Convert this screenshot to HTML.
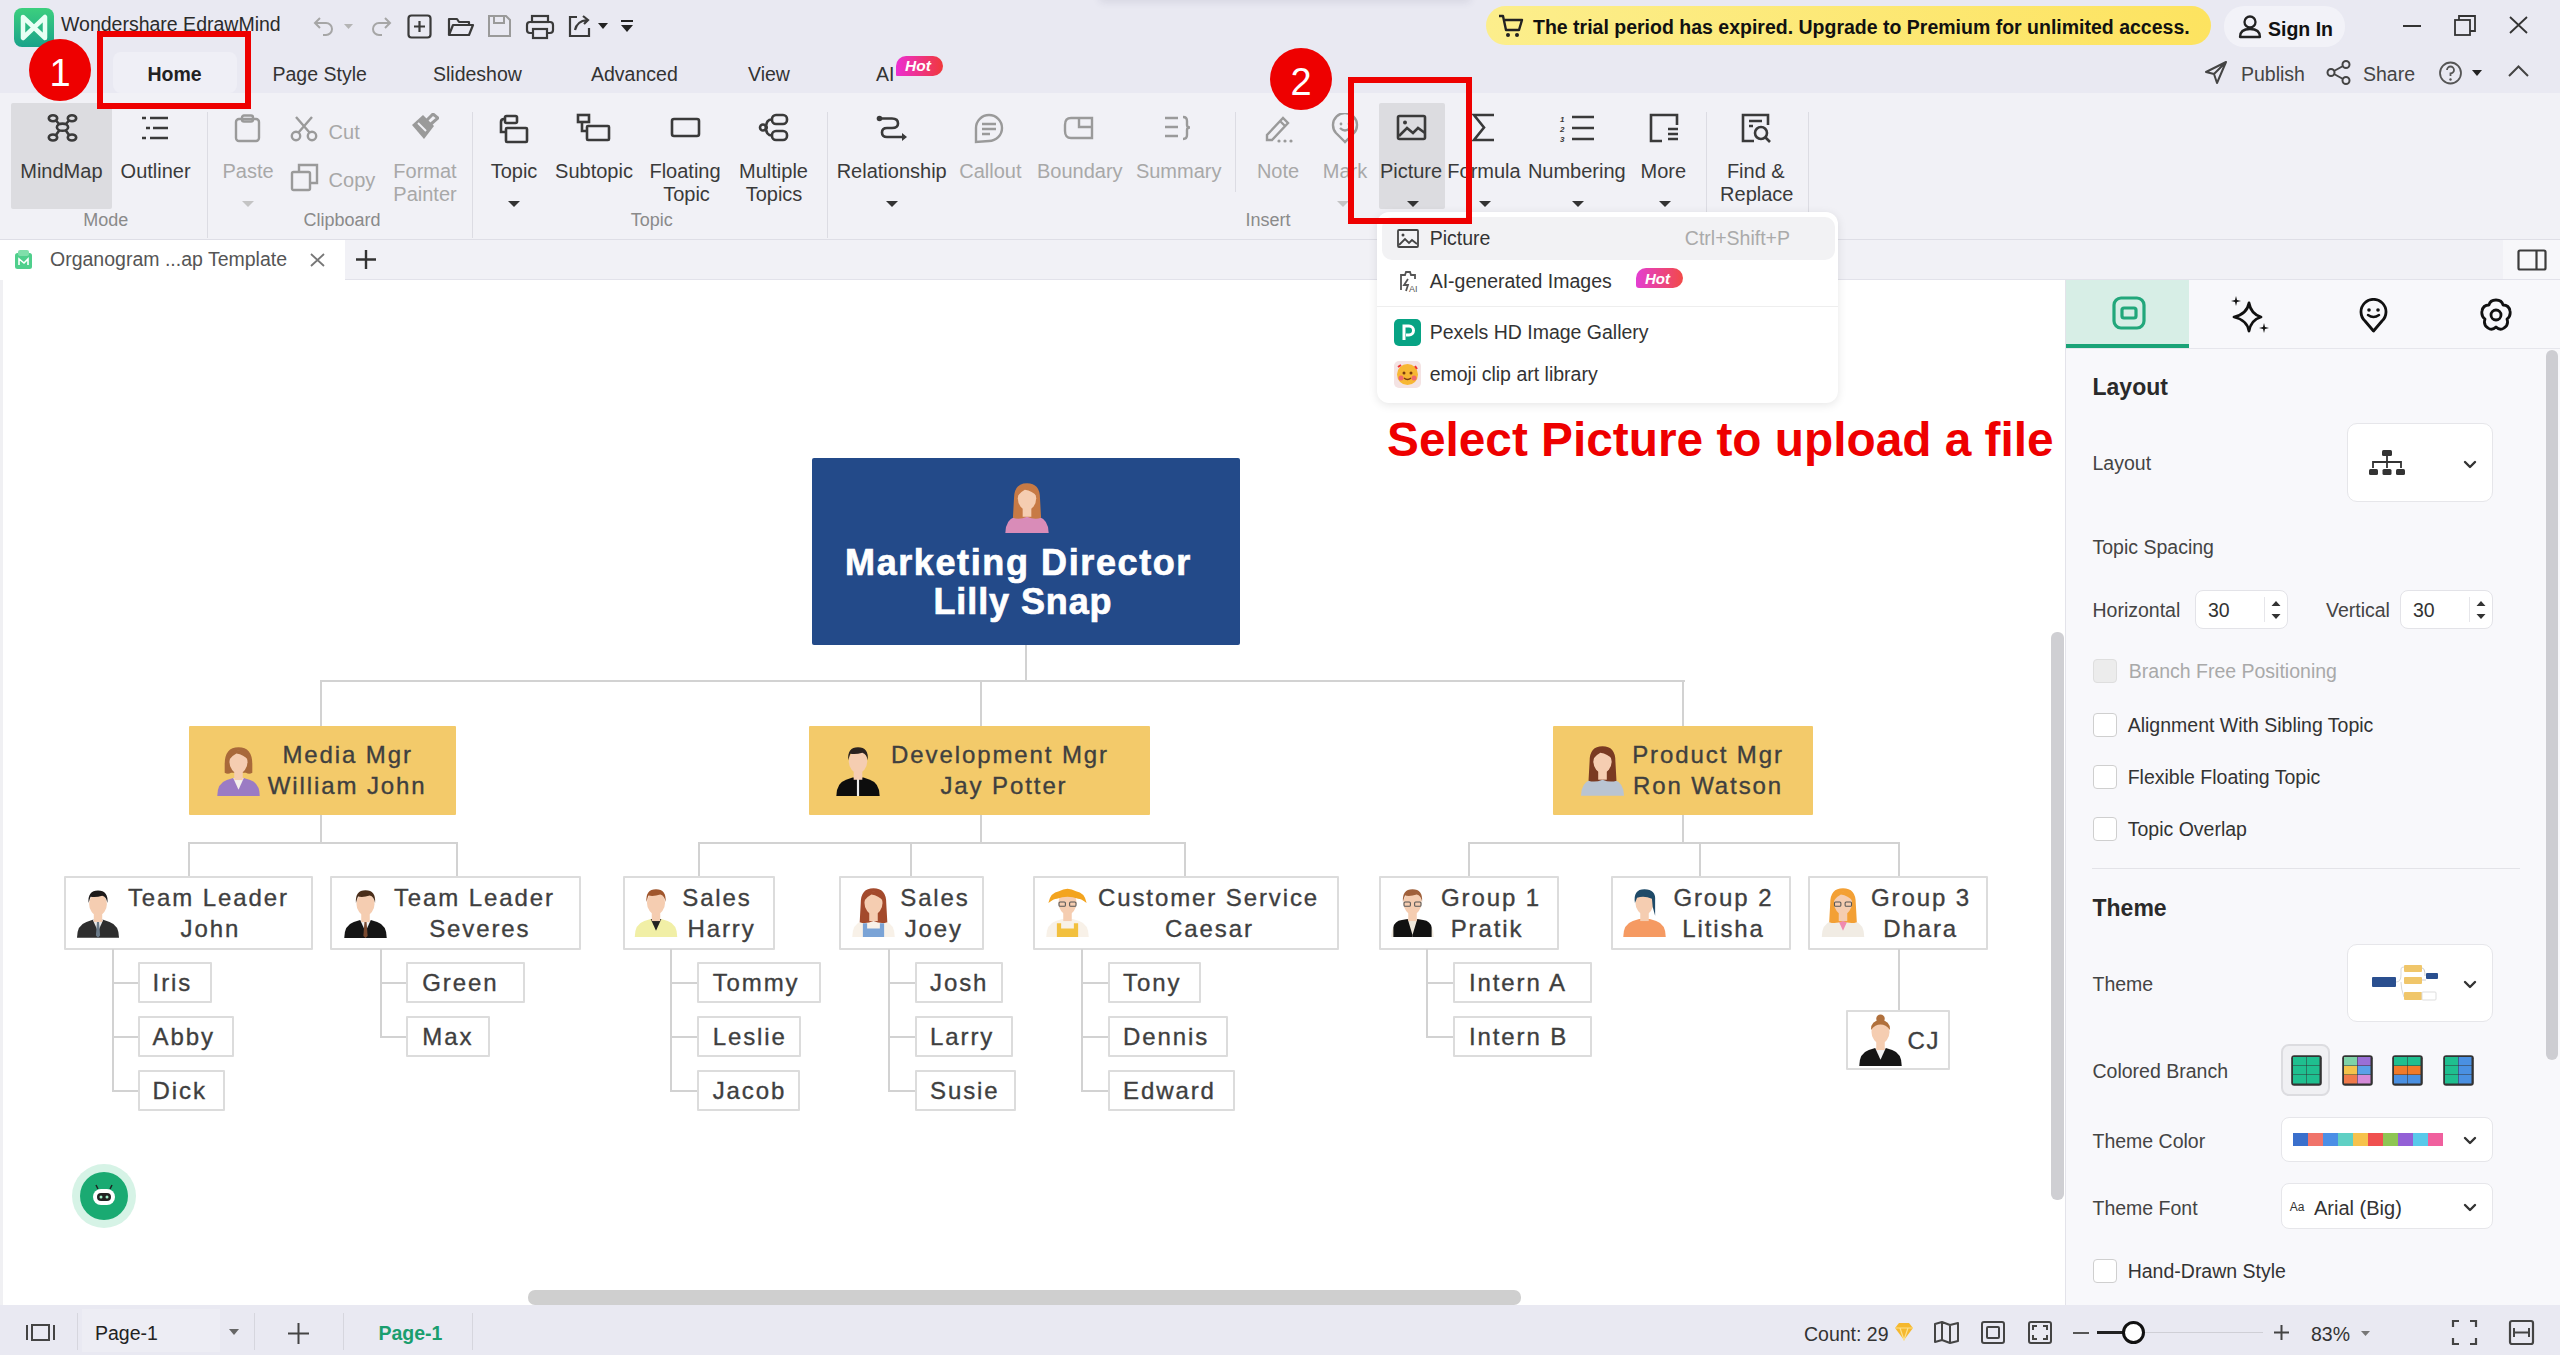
<!DOCTYPE html>
<html><head><meta charset="utf-8"><style>
html,body{margin:0;padding:0;}
body{width:2560px;height:1355px;overflow:hidden;position:relative;background:#ffffff;font-family:"Liberation Sans", sans-serif;}
div{font-family:"Liberation Sans", sans-serif;}
</style></head><body>
<div style="position:absolute;left:0px;top:0px;width:2560px;height:93px;background:#e9e9f2;border-radius:0px;"></div>
<div style="position:absolute;left:0px;top:93px;width:2560px;height:146px;background:#f1f1f6;border-radius:0px;"></div>
<div style="position:absolute;left:0px;top:239px;width:2560px;height:1px;background:#dedee6;border-radius:0px;"></div>
<div style="position:absolute;left:0px;top:240px;width:2560px;height:40px;background:#f1f1f6;border-radius:0px;"></div>
<div style="position:absolute;left:0px;top:279px;width:2560px;height:1px;background:#e2e2ea;border-radius:0px;"></div>
<div style="position:absolute;left:0px;top:280px;width:2065px;height:1025px;background:#ffffff;border-radius:0px;"></div>
<div style="position:absolute;left:0px;top:240px;width:345px;height:41px;background:#ffffff;border-radius:0px;"></div>
<div style="position:absolute;left:0px;top:280px;width:3px;height:1025px;background:#f0f0f3;border-radius:0px;"></div>
<div style="position:absolute;left:2503px;top:240px;width:57px;height:39px;background:#f7f7fa;border-radius:0px;"></div>
<svg style="position:absolute;left:2517px;top:249px;" width="30" height="22" viewBox="0 0 30 22" fill="none"><rect x="1.5" y="1.5" width="27" height="19" rx="1.5" stroke="#3c3c3c" stroke-width="2.2"/><line x1="19.5" y1="1.5" x2="19.5" y2="20.5" stroke="#3c3c3c" stroke-width="2.2"/></svg>
<div style="position:absolute;left:0px;top:1305px;width:2560px;height:50px;background:#e9e9f2;border-radius:0px;"></div>
<svg style="position:absolute;left:14px;top:8px;" width="40" height="39" viewBox="0 0 40 39" fill="none"><defs><linearGradient id="lg" x1="0" y1="0" x2="0" y2="1"><stop offset="0" stop-color="#3ccf7e"/><stop offset="1" stop-color="#1aa38a"/></linearGradient></defs><rect x="0" y="0" width="40" height="39" rx="8" fill="url(#lg)"/><path d="M9 9 L20 19.5 L31 9 L31 30 L20 19.5 L9 30 Z" stroke="#e8fff4" stroke-width="4.5" stroke-linejoin="round" fill="none"/></svg>
<div style="position:absolute;left:61.0px;top:14.5px;font-size:19.5px;line-height:19.5px;color:#2b2b2b;font-weight:normal;white-space:pre;">Wondershare EdrawMind</div>
<svg style="position:absolute;left:312px;top:14px;" width="24" height="24" viewBox="0 0 24 24" fill="none"><path d="M8 4 L3 9 L8 14" stroke="#a6a6a6" stroke-width="2" fill="none"/><path d="M3 9 H14 A6 6 0 0 1 14 21 H11" stroke="#a6a6a6" stroke-width="2" fill="none"/></svg>
<svg style="position:absolute;left:343.5px;top:23.5px;" width="9" height="5" viewBox="0 0 9 5" fill="none"><path d="M0 0 L9 0 L4.5 5 Z" fill="#b5b5b5"/></svg>
<svg style="position:absolute;left:369px;top:14px;" width="24" height="24" viewBox="0 0 24 24" fill="none"><path d="M16 4 L21 9 L16 14" stroke="#a6a6a6" stroke-width="2" fill="none"/><path d="M21 9 H10 A6 6 0 0 0 10 21 H13" stroke="#a6a6a6" stroke-width="2" fill="none"/></svg>
<svg style="position:absolute;left:407px;top:14px;" width="26" height="26" viewBox="0 0 26 26" fill="none"><rect x="1.5" y="1.5" width="22" height="22" rx="3" stroke="#3a3a3a" stroke-width="2.2"/><path d="M12.5 7 V18 M7 12.5 H18" stroke="#3a3a3a" stroke-width="2.2"/></svg>
<svg style="position:absolute;left:447px;top:16px;" width="28" height="22" viewBox="0 0 28 22" fill="none"><path d="M2 19 V3 H10 L12 6 H22 V9" stroke="#3a3a3a" stroke-width="2.2" fill="none" stroke-linejoin="round"/><path d="M2 19 L6 9 H26 L22 19 Z" stroke="#3a3a3a" stroke-width="2.2" fill="none" stroke-linejoin="round"/></svg>
<svg style="position:absolute;left:487px;top:14px;" width="26" height="24" viewBox="0 0 26 24" fill="none"><path d="M2 2 H19 L23 6 V22 H2 Z" stroke="#9a9a9a" stroke-width="2" fill="none"/><rect x="7" y="2" width="10" height="7" stroke="#9a9a9a" stroke-width="2"/></svg>
<svg style="position:absolute;left:525px;top:14px;" width="30" height="26" viewBox="0 0 30 26" fill="none"><rect x="7" y="2" width="16" height="6" stroke="#3a3a3a" stroke-width="2.2"/><rect x="2" y="8" width="26" height="11" rx="3" stroke="#3a3a3a" stroke-width="2.2"/><rect x="8" y="15" width="14" height="9" stroke="#3a3a3a" stroke-width="2.2" fill="#e9e9f2"/></svg>
<svg style="position:absolute;left:567px;top:14px;" width="26" height="24" viewBox="0 0 26 24" fill="none"><path d="M10 3 H3 V22 H22 V14" stroke="#3a3a3a" stroke-width="2.2" fill="none"/><path d="M8 16 Q10 7 20 6 M16 2 L21 6 L17 10" stroke="#3a3a3a" stroke-width="2.2" fill="none"/></svg>
<svg style="position:absolute;left:598.0px;top:23.0px;" width="10" height="6" viewBox="0 0 10 6" fill="none"><path d="M0 0 L10 0 L5.0 6 Z" fill="#222"/></svg>
<svg style="position:absolute;left:621px;top:20px;" width="13" height="14" viewBox="0 0 13 14" fill="none"><rect x="0" y="0" width="12" height="2" fill="#222"/><path d="M0 5 H12 L6 12 Z" fill="#222"/></svg>
<div style="position:absolute;left:1486px;top:6px;width:725px;height:39px;border-radius:20px;background:linear-gradient(90deg,#fcee8c,#fde360);"></div>
<svg style="position:absolute;left:1498px;top:14px;" width="26" height="24" viewBox="0 0 26 24" fill="none"><path d="M1 2 H5 L8 16 H21 L24 6 H7" stroke="#222" stroke-width="2.4" fill="none" stroke-linejoin="round"/><circle cx="10" cy="21" r="2" fill="#222"/><circle cx="19" cy="21" r="2" fill="#222"/></svg>
<div style="position:absolute;left:1533.0px;top:17.5px;font-size:19.5px;line-height:19.5px;color:#111;font-weight:bold;white-space:pre;">The trial period has expired. Upgrade to Premium for unlimited access.</div>
<div style="position:absolute;left:2224px;top:6px;width:121px;height:41px;background:#f2f2f8;border-radius:20px;"></div>
<svg style="position:absolute;left:2238px;top:15px;" width="24" height="24" viewBox="0 0 24 24" fill="none"><circle cx="12" cy="7" r="5.5" stroke="#222" stroke-width="2.3"/><path d="M2 22 Q2 14 12 14 Q22 14 22 22 Z" stroke="#222" stroke-width="2.3" fill="none" stroke-linejoin="round"/></svg>
<div style="position:absolute;left:2268.0px;top:19.5px;font-size:19.5px;line-height:19.5px;color:#111;font-weight:bold;white-space:pre;">Sign In</div>
<div style="position:absolute;left:2403px;top:25px;width:18px;height:2px;background:#333;border-radius:0px;"></div>
<svg style="position:absolute;left:2454px;top:15px;" width="23" height="21" viewBox="0 0 23 21" fill="none"><rect x="1" y="5" width="15" height="15" stroke="#333" stroke-width="1.8"/><path d="M5 5 V1 H21 V16 H16" stroke="#333" stroke-width="1.8" fill="none"/></svg>
<svg style="position:absolute;left:2509px;top:16px;" width="19" height="18" viewBox="0 0 19 18" fill="none"><path d="M1 1 L18 17 M18 1 L1 17" stroke="#333" stroke-width="1.8"/></svg>
<div style="position:absolute;left:113px;top:52px;width:124px;height:41px;background:#efeff6;border-radius:8px;"></div>
<div style="position:absolute;left:147.5px;top:64.5px;font-size:19.5px;line-height:19.5px;color:#222;font-weight:bold;white-space:pre;">Home</div>
<div style="position:absolute;left:272.5px;top:64.5px;font-size:19.5px;line-height:19.5px;color:#333;font-weight:normal;white-space:pre;">Page Style</div>
<div style="position:absolute;left:433.0px;top:64.5px;font-size:19.5px;line-height:19.5px;color:#333;font-weight:normal;white-space:pre;">Slideshow</div>
<div style="position:absolute;left:591.0px;top:64.5px;font-size:19.5px;line-height:19.5px;color:#333;font-weight:normal;white-space:pre;">Advanced</div>
<div style="position:absolute;left:748.0px;top:64.5px;font-size:19.5px;line-height:19.5px;color:#333;font-weight:normal;white-space:pre;">View</div>
<div style="position:absolute;left:876.0px;top:64.5px;font-size:19.5px;line-height:19.5px;color:#333;font-weight:normal;white-space:pre;">AI</div>
<div style="position:absolute;left:896px;top:56px;width:47px;height:20px;border-radius:10px 10px 10px 1px;background:linear-gradient(90deg,#ec2fd2,#f0383a);"></div>
<div style="position:absolute;left:905.0px;top:58.4px;font-size:15.5px;line-height:15.5px;color:#fff;font-weight:bold;font-style:italic;white-space:pre;">Hot</div>
<svg style="position:absolute;left:2204px;top:60px;" width="24" height="25" viewBox="0 0 24 25" fill="none"><path d="M22 2 L2 12 L10 14 L13 23 Z M10 14 L22 2" stroke="#444" stroke-width="2" fill="none" stroke-linejoin="round"/></svg>
<div style="position:absolute;left:2241.0px;top:64.5px;font-size:19.5px;line-height:19.5px;color:#444;font-weight:normal;white-space:pre;">Publish</div>
<svg style="position:absolute;left:2326px;top:60px;" width="26" height="25" viewBox="0 0 26 25" fill="none"><circle cx="5" cy="12.5" r="3.5" stroke="#444" stroke-width="2"/><circle cx="20" cy="4.5" r="3.5" stroke="#444" stroke-width="2"/><circle cx="20" cy="20.5" r="3.5" stroke="#444" stroke-width="2"/><path d="M8 11 L17 6 M8 14 L17 19" stroke="#444" stroke-width="2"/></svg>
<div style="position:absolute;left:2363.0px;top:64.5px;font-size:19.5px;line-height:19.5px;color:#444;font-weight:normal;white-space:pre;">Share</div>
<svg style="position:absolute;left:2438px;top:61px;" width="25" height="24" viewBox="0 0 25 24" fill="none"><circle cx="12.5" cy="12" r="10.5" stroke="#555" stroke-width="1.8"/><path d="M9 9 A3.5 3.5 0 1 1 12.5 12.5 V15" stroke="#555" stroke-width="1.8" fill="none"/><circle cx="12.5" cy="18.5" r="1.2" fill="#555"/></svg>
<svg style="position:absolute;left:2471.5px;top:70.0px;" width="10" height="6" viewBox="0 0 10 6" fill="none"><path d="M0 0 L10 0 L5.0 6 Z" fill="#222"/></svg>
<svg style="position:absolute;left:2508px;top:65px;" width="21" height="12" viewBox="0 0 21 12" fill="none"><path d="M1 11 L10.5 1.5 L20 11" stroke="#444" stroke-width="2" fill="none"/></svg>
<div style="position:absolute;left:11px;top:103px;width:101px;height:106px;background:#dcdce0;border-radius:2px;"></div>
<div style="position:absolute;left:1379px;top:103px;width:66px;height:106px;background:#dcdce0;border-radius:2px;"></div>
<div style="position:absolute;left:207px;top:112px;width:1px;height:126px;background:#dcdce3;border-radius:0px;"></div>
<div style="position:absolute;left:472px;top:112px;width:1px;height:126px;background:#dcdce3;border-radius:0px;"></div>
<div style="position:absolute;left:827px;top:112px;width:1px;height:126px;background:#dcdce3;border-radius:0px;"></div>
<div style="position:absolute;left:1235px;top:112px;width:1px;height:80px;background:#dcdce3;border-radius:0px;"></div>
<div style="position:absolute;left:1706px;top:112px;width:1px;height:126px;background:#dcdce3;border-radius:0px;"></div>
<div style="position:absolute;left:1808px;top:112px;width:1px;height:126px;background:#dcdce3;border-radius:0px;"></div>
<svg style="position:absolute;left:47px;top:113px;" width="31" height="30" viewBox="0 0 31 30" fill="none"><path d="M9 7.5 L12.5 11.5 M22 7.5 L18.5 11.5 M12.5 17 L9 22 M18.5 17 L22 22" stroke="#3a3a3a" stroke-width="2.6" fill="none"/><ellipse cx="6" cy="5.2" rx="4.2" ry="3" stroke="#3a3a3a" stroke-width="2.6" fill="none"/><ellipse cx="25" cy="5.2" rx="4.2" ry="3" stroke="#3a3a3a" stroke-width="2.6" fill="none"/><ellipse cx="15.5" cy="14.2" rx="5.6" ry="3.6" stroke="#3a3a3a" stroke-width="2.6" fill="none"/><ellipse cx="6" cy="24.5" rx="4.2" ry="3" stroke="#3a3a3a" stroke-width="2.6" fill="none"/><ellipse cx="25" cy="24.5" rx="4.2" ry="3" stroke="#3a3a3a" stroke-width="2.6" fill="none"/></svg>
<div style="position:absolute;left:-538.6px;width:1200px;text-align:center;top:160.6px;font-size:20px;line-height:20px;color:#3a3a3a;font-weight:normal;white-space:pre;">MindMap</div>
<svg style="position:absolute;left:140px;top:115px;" width="30" height="26" viewBox="0 0 30 26" fill="none"><path d="M2 3 H6 M10 3 H28 M6 13 H10 M13 13 H28 M2 23 H6 M10 23 H28" stroke="#3a3a3a" stroke-width="2.6"/></svg>
<div style="position:absolute;left:-444.4px;width:1200px;text-align:center;top:160.6px;font-size:20px;line-height:20px;color:#3a3a3a;font-weight:normal;white-space:pre;">Outliner</div>
<div style="position:absolute;left:-494.2px;width:1200px;text-align:center;top:210.8px;font-size:18px;line-height:18px;color:#8a8a8a;font-weight:normal;white-space:pre;">Mode</div>
<svg style="position:absolute;left:234px;top:114px;" width="28" height="29" viewBox="0 0 28 29" fill="none"><rect x="2" y="5" width="23" height="22" rx="3" stroke="#9a9a9a" stroke-width="2.4" fill="none"/><rect x="8" y="1.5" width="11" height="6" rx="2" stroke="#9a9a9a" stroke-width="2.4" fill="none" fill="#f1f1f6"/></svg>
<div style="position:absolute;left:-352.0px;width:1200px;text-align:center;top:160.6px;font-size:20px;line-height:20px;color:#a8a8a8;font-weight:normal;white-space:pre;">Paste</div>
<svg style="position:absolute;left:242.0px;top:201.0px;" width="12" height="6" viewBox="0 0 12 6" fill="none"><path d="M0 0 L12 0 L6.0 6 Z" fill="#c4c4c4"/></svg>
<svg style="position:absolute;left:290px;top:116px;" width="29" height="26" viewBox="0 0 29 26" fill="none"><circle cx="6" cy="20" r="4.2" stroke="#9a9a9a" stroke-width="2.4" fill="none"/><circle cx="22" cy="20" r="4.2" stroke="#9a9a9a" stroke-width="2.4" fill="none"/><path d="M8.5 16.5 L22 1 M19.5 16.5 L6 1" stroke="#9a9a9a" stroke-width="2.4" fill="none"/></svg>
<div style="position:absolute;left:328.6px;top:121.6px;font-size:20px;line-height:20px;color:#a8a8a8;font-weight:normal;white-space:pre;">Cut</div>
<svg style="position:absolute;left:290px;top:163px;" width="30" height="29" viewBox="0 0 30 29" fill="none"><rect x="2" y="9" width="18" height="18" rx="1.5" stroke="#9a9a9a" stroke-width="2.4" fill="none"/><path d="M9 8 V2 H27 V20 H21" stroke="#9a9a9a" stroke-width="2.4" fill="none"/></svg>
<div style="position:absolute;left:328.6px;top:170.1px;font-size:20px;line-height:20px;color:#a8a8a8;font-weight:normal;white-space:pre;">Copy</div>
<svg style="position:absolute;left:409px;top:113px;" width="30" height="29" viewBox="0 0 30 29" fill="none"><path d="M3 12 L14 2 L25 13 L15 26 Z" fill="#9a9a9a"/><path d="M17 8 L24 1 L29 5 L22 11" stroke="#9a9a9a" stroke-width="3" fill="none"/><path d="M9 10 L17 18" stroke="#f1f1f6" stroke-width="2"/></svg>
<div style="position:absolute;left:-175.0px;width:1200px;text-align:center;top:160.6px;font-size:20px;line-height:20px;color:#a8a8a8;font-weight:normal;white-space:pre;">Format</div>
<div style="position:absolute;left:-175.0px;width:1200px;text-align:center;top:184.1px;font-size:20px;line-height:20px;color:#a8a8a8;font-weight:normal;white-space:pre;">Painter</div>
<div style="position:absolute;left:-258.0px;width:1200px;text-align:center;top:210.8px;font-size:18px;line-height:18px;color:#8a8a8a;font-weight:normal;white-space:pre;">Clipboard</div>
<svg style="position:absolute;left:499px;top:114px;" width="31" height="31" viewBox="0 0 31 31" fill="none"><path d="M6 18 H2 V8 Q2 5 5 5 H6" stroke="#3a3a3a" stroke-width="2.6" fill="none"/><rect x="6" y="2" width="12" height="7" rx="1.5" stroke="#3a3a3a" stroke-width="2.6" fill="none"/><rect x="7" y="14" width="21" height="14" rx="1" stroke="#3a3a3a" stroke-width="2.6" fill="none"/></svg>
<div style="position:absolute;left:-86.0px;width:1200px;text-align:center;top:160.6px;font-size:20px;line-height:20px;color:#3a3a3a;font-weight:normal;white-space:pre;">Topic</div>
<svg style="position:absolute;left:508.0px;top:201.0px;" width="12" height="6" viewBox="0 0 12 6" fill="none"><path d="M0 0 L12 0 L6.0 6 Z" fill="#333"/></svg>
<svg style="position:absolute;left:576px;top:113px;" width="36" height="31" viewBox="0 0 36 31" fill="none"><rect x="2" y="2" width="11" height="7" stroke="#3a3a3a" stroke-width="2.6" fill="none"/><path d="M6 9 V18 H11" stroke="#3a3a3a" stroke-width="2.6" fill="none"/><rect x="11" y="13" width="22" height="14" rx="1" stroke="#3a3a3a" stroke-width="2.6" fill="none"/></svg>
<div style="position:absolute;left:-6.0px;width:1200px;text-align:center;top:160.6px;font-size:20px;line-height:20px;color:#3a3a3a;font-weight:normal;white-space:pre;">Subtopic</div>
<svg style="position:absolute;left:670px;top:117px;" width="32" height="22" viewBox="0 0 32 22" fill="none"><rect x="2" y="2" width="27" height="17" rx="2" stroke="#3a3a3a" stroke-width="2.6" fill="none"/></svg>
<div style="position:absolute;left:85.0px;width:1200px;text-align:center;top:160.6px;font-size:20px;line-height:20px;color:#3a3a3a;font-weight:normal;white-space:pre;">Floating</div>
<div style="position:absolute;left:86.5px;width:1200px;text-align:center;top:184.1px;font-size:20px;line-height:20px;color:#3a3a3a;font-weight:normal;white-space:pre;">Topic</div>
<svg style="position:absolute;left:758px;top:113px;" width="32" height="30" viewBox="0 0 32 30" fill="none"><rect x="14" y="2" width="15" height="9" rx="4" stroke="#3a3a3a" stroke-width="2.6" fill="none"/><rect x="14" y="18" width="15" height="9" rx="4" stroke="#3a3a3a" stroke-width="2.6" fill="none"/><path d="M14 6.5 Q8 6.5 8 14.5 Q8 22.5 14 22.5" stroke="#3a3a3a" stroke-width="2.6" fill="none"/><ellipse cx="5" cy="14.5" rx="3" ry="3" stroke="#3a3a3a" stroke-width="2.6" fill="none"/><path d="M8 14.5 H10" stroke="#3a3a3a" stroke-width="2.6" fill="none"/></svg>
<div style="position:absolute;left:173.5px;width:1200px;text-align:center;top:160.6px;font-size:20px;line-height:20px;color:#3a3a3a;font-weight:normal;white-space:pre;">Multiple</div>
<div style="position:absolute;left:174.0px;width:1200px;text-align:center;top:184.1px;font-size:20px;line-height:20px;color:#3a3a3a;font-weight:normal;white-space:pre;">Topics</div>
<div style="position:absolute;left:51.8px;width:1200px;text-align:center;top:210.8px;font-size:18px;line-height:18px;color:#8a8a8a;font-weight:normal;white-space:pre;">Topic</div>
<svg style="position:absolute;left:876px;top:115px;" width="34" height="27" viewBox="0 0 34 27" fill="none"><circle cx="3.5" cy="3.5" r="2.8" fill="#3a3a3a"/><path d="M4 3.5 H16 Q22 3.5 22 8.5 Q22 13 16 13 H11 Q6 13 6 17.5 Q6 22 11 22 H27" stroke="#3a3a3a" stroke-width="2.6" fill="none"/><path d="M26 18 L31 22 L26 26 Z" fill="#3a3a3a"/></svg>
<div style="position:absolute;left:291.7px;width:1200px;text-align:center;top:160.6px;font-size:20px;line-height:20px;color:#3a3a3a;font-weight:normal;white-space:pre;">Relationship</div>
<svg style="position:absolute;left:886.0px;top:201.0px;" width="12" height="6" viewBox="0 0 12 6" fill="none"><path d="M0 0 L12 0 L6.0 6 Z" fill="#333"/></svg>
<svg style="position:absolute;left:973px;top:113px;" width="32" height="31" viewBox="0 0 32 31" fill="none"><path d="M3 29 V15 A13 13 0 1 1 16 28 Z" stroke="#9a9a9a" stroke-width="2.4" fill="none"/><path d="M9 11 H23 M9 16 H23 M9 21 H17" stroke="#9a9a9a" stroke-width="2.4" fill="none"/></svg>
<div style="position:absolute;left:390.4px;width:1200px;text-align:center;top:160.6px;font-size:20px;line-height:20px;color:#a8a8a8;font-weight:normal;white-space:pre;">Callout</div>
<svg style="position:absolute;left:1063px;top:116px;" width="32" height="25" viewBox="0 0 32 25" fill="none"><path d="M8 2 H29 V22 H8 Q2 22 2 15 V9 Q2 2 8 2 Z" stroke="#9a9a9a" stroke-width="2.4" fill="none"/><path d="M16 2 V11 H29" stroke="#9a9a9a" stroke-width="2.4" fill="none"/></svg>
<div style="position:absolute;left:479.8px;width:1200px;text-align:center;top:160.6px;font-size:20px;line-height:20px;color:#a8a8a8;font-weight:normal;white-space:pre;">Boundary</div>
<svg style="position:absolute;left:1163px;top:115px;" width="30" height="27" viewBox="0 0 30 27" fill="none"><path d="M2 3 H15 M2 12 H15 M2 21 H15" stroke="#9a9a9a" stroke-width="2.4" fill="none"/><path d="M20 2 Q24 2 24 6 V10 Q24 12.5 27 12.5 Q24 12.5 24 15 V20 Q24 24 20 24" stroke="#9a9a9a" stroke-width="2.4" fill="none"/></svg>
<div style="position:absolute;left:578.7px;width:1200px;text-align:center;top:160.6px;font-size:20px;line-height:20px;color:#a8a8a8;font-weight:normal;white-space:pre;">Summary</div>
<svg style="position:absolute;left:1264px;top:113px;" width="31" height="31" viewBox="0 0 31 31" fill="none"><path d="M3 22 L3 27 L8 27 L24 10 L19 5 Z M16 8 L21 13" stroke="#9a9a9a" stroke-width="2.4" fill="none"/><circle cx="15" cy="28" r="1.6" fill="#9a9a9a"/><circle cx="21" cy="28" r="1.6" fill="#9a9a9a"/><circle cx="27" cy="28" r="1.6" fill="#9a9a9a"/></svg>
<div style="position:absolute;left:678.0px;width:1200px;text-align:center;top:160.6px;font-size:20px;line-height:20px;color:#a8a8a8;font-weight:normal;white-space:pre;">Note</div>
<svg style="position:absolute;left:1331px;top:113px;" width="28" height="31" viewBox="0 0 28 31" fill="none"><path d="M14 29 L5 20 A12 12 0 1 1 23 20 Z" stroke="#9a9a9a" stroke-width="2.4" fill="none"/><circle cx="10" cy="11" r="1.4" fill="#9a9a9a"/><circle cx="18" cy="11" r="1.4" fill="#9a9a9a"/><path d="M9 15 Q14 20 19 15" stroke="#9a9a9a" stroke-width="2.4" fill="none"/></svg>
<div style="position:absolute;left:745.0px;width:1200px;text-align:center;top:160.6px;font-size:20px;line-height:20px;color:#a8a8a8;font-weight:normal;white-space:pre;">Mark</div>
<svg style="position:absolute;left:1337.0px;top:201.0px;" width="12" height="6" viewBox="0 0 12 6" fill="none"><path d="M0 0 L12 0 L6.0 6 Z" fill="#c4c4c4"/></svg>
<div style="position:absolute;left:668.0px;width:1200px;text-align:center;top:210.8px;font-size:18px;line-height:18px;color:#8a8a8a;font-weight:normal;white-space:pre;">Insert</div>
<svg style="position:absolute;left:1396px;top:114px;" width="32" height="28" viewBox="0 0 32 28" fill="none"><rect x="2" y="2" width="27" height="23" rx="1.5" stroke="#3a3a3a" stroke-width="2.6" fill="none"/><circle cx="9" cy="8.5" r="2" fill="#3a3a3a"/><path d="M3 22 L11 14 L17 19 L22 14 L29 19" stroke="#3a3a3a" stroke-width="2.6" fill="none"/></svg>
<div style="position:absolute;left:811.0px;width:1200px;text-align:center;top:160.6px;font-size:20px;line-height:20px;color:#3a3a3a;font-weight:normal;white-space:pre;">Picture</div>
<svg style="position:absolute;left:1407.0px;top:201.0px;" width="12" height="6" viewBox="0 0 12 6" fill="none"><path d="M0 0 L12 0 L6.0 6 Z" fill="#333"/></svg>
<svg style="position:absolute;left:1471px;top:113px;" width="26" height="30" viewBox="0 0 26 30" fill="none"><path d="M23 2 H3 L13 14.5 L3 27 H23" stroke="#3a3a3a" stroke-width="2.6" fill="none"/></svg>
<div style="position:absolute;left:884.0px;width:1200px;text-align:center;top:160.6px;font-size:20px;line-height:20px;color:#3a3a3a;font-weight:normal;white-space:pre;">Formula</div>
<svg style="position:absolute;left:1479.0px;top:201.0px;" width="12" height="6" viewBox="0 0 12 6" fill="none"><path d="M0 0 L12 0 L6.0 6 Z" fill="#333"/></svg>
<svg style="position:absolute;left:1559px;top:113px;" width="37" height="30" viewBox="0 0 37 30" fill="none"><path d="M13 4 H35 M13 15 H35 M13 26 H35" stroke="#3a3a3a" stroke-width="2.6" fill="none"/><text x="1" y="9" font-size="8" font-style="italic" font-weight="bold" fill="#3a3a3a" font-family="Liberation Sans">1</text><text x="1" y="19" font-size="8" font-style="italic" font-weight="bold" fill="#3a3a3a" font-family="Liberation Sans">2</text><text x="1" y="29" font-size="8" font-style="italic" font-weight="bold" fill="#3a3a3a" font-family="Liberation Sans">3</text></svg>
<div style="position:absolute;left:976.8px;width:1200px;text-align:center;top:160.6px;font-size:20px;line-height:20px;color:#3a3a3a;font-weight:normal;white-space:pre;">Numbering</div>
<svg style="position:absolute;left:1572.0px;top:201.0px;" width="12" height="6" viewBox="0 0 12 6" fill="none"><path d="M0 0 L12 0 L6.0 6 Z" fill="#333"/></svg>
<svg style="position:absolute;left:1648px;top:112px;" width="33" height="32" viewBox="0 0 33 32" fill="none"><path d="M29 13 V3 H3 V29 H14" stroke="#3a3a3a" stroke-width="2.6" fill="none"/><path d="M20 17 H30 M20 22 H30 M20 27 H30" stroke="#3a3a3a" stroke-width="2.6" fill="none"/></svg>
<div style="position:absolute;left:1063.3px;width:1200px;text-align:center;top:160.6px;font-size:20px;line-height:20px;color:#3a3a3a;font-weight:normal;white-space:pre;">More</div>
<svg style="position:absolute;left:1658.5px;top:201.0px;" width="12" height="6" viewBox="0 0 12 6" fill="none"><path d="M0 0 L12 0 L6.0 6 Z" fill="#333"/></svg>
<svg style="position:absolute;left:1740px;top:112px;" width="33" height="32" viewBox="0 0 33 32" fill="none"><path d="M14 29 H3 V3 H28 V13" stroke="#3a3a3a" stroke-width="2.6" fill="none"/><path d="M9 9 H22 M9 14 H13" stroke="#3a3a3a" stroke-width="2.6" fill="none"/><circle cx="21" cy="21" r="6" stroke="#3a3a3a" stroke-width="2.6" fill="none"/><path d="M25.5 25.5 L30 30" stroke="#3a3a3a" stroke-width="2.6" fill="none"/></svg>
<div style="position:absolute;left:1155.8px;width:1200px;text-align:center;top:160.6px;font-size:20px;line-height:20px;color:#3a3a3a;font-weight:normal;white-space:pre;">Find &amp;</div>
<div style="position:absolute;left:1156.8px;width:1200px;text-align:center;top:184.1px;font-size:20px;line-height:20px;color:#3a3a3a;font-weight:normal;white-space:pre;">Replace</div>
<svg style="position:absolute;left:15px;top:250px;" width="18" height="19" viewBox="0 0 18 19" fill="none"><rect x="0" y="3" width="17" height="16" rx="2.5" fill="#4fcf8c"/><rect x="3" y="0" width="11" height="6" rx="2" fill="#7fdfaa"/><path d="M4 15 V9 L9 13 L13 9 V15" stroke="#fff" stroke-width="1.6" fill="none"/></svg>
<div style="position:absolute;left:50.0px;top:249.5px;font-size:19.5px;line-height:19.5px;color:#555;font-weight:normal;white-space:pre;">Organogram ...ap Template</div>
<svg style="position:absolute;left:310px;top:253px;" width="15" height="14" viewBox="0 0 15 14" fill="none"><path d="M1 1 L14 13 M14 1 L1 13" stroke="#777" stroke-width="1.8"/></svg>
<svg style="position:absolute;left:355px;top:249px;" width="22" height="21" viewBox="0 0 22 21" fill="none"><path d="M11 1 V20 M1 10.5 H21" stroke="#333" stroke-width="2.4"/></svg>
<div style="position:absolute;left:1025px;top:645px;width:2px;height:36px;background:#d2d2d2;border-radius:0px;"></div>
<div style="position:absolute;left:320px;top:680px;width:1365px;height:2px;background:#d2d2d2;border-radius:0px;"></div>
<div style="position:absolute;left:320px;top:680px;width:2px;height:47px;background:#d2d2d2;border-radius:0px;"></div>
<div style="position:absolute;left:980px;top:680px;width:2px;height:47px;background:#d2d2d2;border-radius:0px;"></div>
<div style="position:absolute;left:1682px;top:680px;width:2px;height:47px;background:#d2d2d2;border-radius:0px;"></div>
<div style="position:absolute;left:812px;top:458px;width:428px;height:187px;background:#234a89;border-radius:2px;"></div>
<svg style="position:absolute;left:1005px;top:481px;overflow:visible;" width="44" height="52" viewBox="0 0 40 48" fill="none"><path d="M0 48 Q0 36 9 33 L15 31 L25 31 L31 33 Q40 36 40 48 Z" fill="#d98cb8"/><path d="M8 16 Q8 2 20 2 Q32 2 32 16 L33 34 Q27 36 20 33 Q13 36 7 34 Z" fill="#c77a45"/><rect x="16" y="24" width="8" height="9" fill="#f5cdb1"/><ellipse cx="20" cy="16" rx="8.5" ry="10.5" fill="#f5cdb1"/><path d="M11 14 Q12 5 20 5 Q28 5 29 14 Q25 9 18 8 Q14 10 11 14 Z" fill="#c77a45"/></svg>
<div style="position:absolute;left:418.5px;width:1200px;text-align:center;top:544.5px;font-size:36px;line-height:36px;color:#ffffff;font-weight:bold;letter-spacing:1.6px;white-space:pre;-webkit-text-stroke:0.7px #ffffff;">Marketing Director</div>
<div style="position:absolute;left:423.0px;width:1200px;text-align:center;top:583.5px;font-size:36px;line-height:36px;color:#ffffff;font-weight:bold;letter-spacing:0.9px;white-space:pre;-webkit-text-stroke:0.7px #ffffff;">Lilly Snap</div>
<div style="position:absolute;left:189px;top:726px;width:267px;height:89px;background:#f3ca6a;border-radius:1px;"></div>
<svg style="position:absolute;left:217px;top:745px;overflow:visible;" width="43" height="51" viewBox="0 0 40 48" fill="none"><path d="M0 48 Q0 36 9 33 L15 31 L25 31 L31 33 Q40 36 40 48 Z" fill="#9b7bc4"/><path d="M15 31 L20 42 L25 31 Z" fill="#f4f0ea"/><path d="M7 18 Q7 2 20 2 Q33 2 33 18 L33 26 Q30 28 27 26 L13 26 Q10 28 7 26 Z" fill="#a8693a"/><rect x="16" y="24" width="8" height="9" fill="#f5cdb1"/><ellipse cx="20" cy="16" rx="8.5" ry="10.5" fill="#f5cdb1"/><path d="M11 14 Q12 5 20 5 Q28 5 29 14 Q25 9 18 8 Q14 10 11 14 Z" fill="#a8693a"/></svg>
<div style="position:absolute;left:-252.4px;width:1200px;text-align:center;top:743.2px;font-size:24px;line-height:24px;color:#3f3f3f;font-weight:normal;letter-spacing:1.9px;white-space:pre;-webkit-text-stroke:0.35px #3f3f3f;">Media Mgr</div>
<div style="position:absolute;left:-252.9px;width:1200px;text-align:center;top:774.2px;font-size:24px;line-height:24px;color:#3f3f3f;font-weight:normal;letter-spacing:1.9px;white-space:pre;-webkit-text-stroke:0.35px #3f3f3f;">William John</div>
<div style="position:absolute;left:809px;top:726px;width:341px;height:89px;background:#f3ca6a;border-radius:1px;"></div>
<svg style="position:absolute;left:836px;top:744px;overflow:visible;" width="44" height="52" viewBox="0 0 40 48" fill="none"><path d="M0 48 Q0 36 9 33 L15 31 L25 31 L31 33 Q40 36 40 48 Z" fill="#0d0d0d"/><rect x="19" y="31" width="2" height="17" fill="#eeeeee"/><rect x="16" y="24" width="8" height="9" fill="#f5cdb1"/><ellipse cx="20" cy="16" rx="8.5" ry="10.5" fill="#f5cdb1"/><path d="M11 15 Q10 3 20 3 Q30 3 29 15 Q28 9 24 8 Q18 10 13 9 Q12 11 11 15 Z" fill="#2a2220"/></svg>
<div style="position:absolute;left:400.0px;width:1200px;text-align:center;top:743.2px;font-size:24px;line-height:24px;color:#3f3f3f;font-weight:normal;letter-spacing:1.9px;white-space:pre;-webkit-text-stroke:0.35px #3f3f3f;">Development Mgr</div>
<div style="position:absolute;left:404.0px;width:1200px;text-align:center;top:774.2px;font-size:24px;line-height:24px;color:#3f3f3f;font-weight:normal;letter-spacing:1.9px;white-space:pre;-webkit-text-stroke:0.35px #3f3f3f;">Jay Potter</div>
<div style="position:absolute;left:1553px;top:726px;width:260px;height:89px;background:#f3ca6a;border-radius:1px;"></div>
<svg style="position:absolute;left:1581px;top:744px;overflow:visible;" width="43" height="52" viewBox="0 0 40 48" fill="none"><path d="M0 48 Q0 36 9 33 L15 31 L25 31 L31 33 Q40 36 40 48 Z" fill="#b9c4d2"/><path d="M8 16 Q8 2 20 2 Q32 2 32 16 L33 34 Q27 36 20 33 Q13 36 7 34 Z" fill="#7a3a22"/><rect x="16" y="24" width="8" height="9" fill="#f5cdb1"/><ellipse cx="20" cy="16" rx="8.5" ry="10.5" fill="#f5cdb1"/><path d="M11 14 Q12 5 20 5 Q28 5 29 14 Q25 9 18 8 Q14 10 11 14 Z" fill="#7a3a22"/></svg>
<div style="position:absolute;left:1108.0px;width:1200px;text-align:center;top:743.2px;font-size:24px;line-height:24px;color:#3f3f3f;font-weight:normal;letter-spacing:1.9px;white-space:pre;-webkit-text-stroke:0.35px #3f3f3f;">Product Mgr</div>
<div style="position:absolute;left:1108.0px;width:1200px;text-align:center;top:774.2px;font-size:24px;line-height:24px;color:#3f3f3f;font-weight:normal;letter-spacing:1.9px;white-space:pre;-webkit-text-stroke:0.35px #3f3f3f;">Ron Watson</div>
<div style="position:absolute;left:188px;top:842px;width:270px;height:2px;background:#d2d2d2;border-radius:0px;"></div>
<div style="position:absolute;left:188px;top:843px;width:2px;height:34px;background:#d2d2d2;border-radius:0px;"></div>
<div style="position:absolute;left:456px;top:843px;width:2px;height:34px;background:#d2d2d2;border-radius:0px;"></div>
<div style="position:absolute;left:320px;top:815px;width:2px;height:29px;background:#d2d2d2;border-radius:0px;"></div>
<div style="position:absolute;left:698px;top:842px;width:488px;height:2px;background:#d2d2d2;border-radius:0px;"></div>
<div style="position:absolute;left:698px;top:843px;width:2px;height:34px;background:#d2d2d2;border-radius:0px;"></div>
<div style="position:absolute;left:910px;top:843px;width:2px;height:34px;background:#d2d2d2;border-radius:0px;"></div>
<div style="position:absolute;left:1184px;top:843px;width:2px;height:34px;background:#d2d2d2;border-radius:0px;"></div>
<div style="position:absolute;left:980px;top:815px;width:2px;height:29px;background:#d2d2d2;border-radius:0px;"></div>
<div style="position:absolute;left:1468px;top:842px;width:432px;height:2px;background:#d2d2d2;border-radius:0px;"></div>
<div style="position:absolute;left:1468px;top:843px;width:2px;height:34px;background:#d2d2d2;border-radius:0px;"></div>
<div style="position:absolute;left:1699px;top:843px;width:2px;height:34px;background:#d2d2d2;border-radius:0px;"></div>
<div style="position:absolute;left:1898px;top:843px;width:2px;height:34px;background:#d2d2d2;border-radius:0px;"></div>
<div style="position:absolute;left:1682px;top:815px;width:2px;height:29px;background:#d2d2d2;border-radius:0px;"></div>
<div style="position:absolute;left:64px;top:876px;width:249px;height:73.5px;background:#fff;border:2.5px solid #dcdcdc;box-sizing:border-box;border-radius:1px;"></div>
<svg style="position:absolute;left:77px;top:887px;overflow:visible;" width="42" height="51" viewBox="0 0 40 48" fill="none"><path d="M0 48 Q0 36 9 33 L15 31 L25 31 L31 33 Q40 36 40 48 Z" fill="#2e2e2e"/><path d="M15 31 L20 42 L25 31 Z" fill="#e9e9e9"/><path d="M19 33 L21 33 L22 46 L20 48 L18 46 Z" fill="#6a7a88"/><rect x="16" y="24" width="8" height="9" fill="#f5cdb1"/><ellipse cx="20" cy="16" rx="8.5" ry="10.5" fill="#f5cdb1"/><path d="M11 15 Q10 3 20 3 Q30 3 29 15 Q28 9 24 8 Q18 10 13 9 Q12 11 11 15 Z" fill="#1d1a1a"/></svg>
<div style="position:absolute;left:-391.6px;width:1200px;text-align:center;top:886.2px;font-size:24px;line-height:24px;color:#3f3f3f;font-weight:normal;letter-spacing:1.9px;white-space:pre;-webkit-text-stroke:0.35px #3f3f3f;">Team Leader</div>
<div style="position:absolute;left:-389.6px;width:1200px;text-align:center;top:917.0px;font-size:24px;line-height:24px;color:#3f3f3f;font-weight:normal;letter-spacing:1.9px;white-space:pre;-webkit-text-stroke:0.35px #3f3f3f;">John</div>
<div style="position:absolute;left:330px;top:876px;width:251px;height:73.5px;background:#fff;border:2.5px solid #dcdcdc;box-sizing:border-box;border-radius:1px;"></div>
<svg style="position:absolute;left:344px;top:887px;overflow:visible;" width="43" height="51" viewBox="0 0 40 48" fill="none"><path d="M0 48 Q0 36 9 33 L15 31 L25 31 L31 33 Q40 36 40 48 Z" fill="#151515"/><path d="M15 31 L20 42 L25 31 Z" fill="#f3f3f3"/><path d="M19 33 L21 33 L22 46 L20 48 L18 46 Z" fill="#7a4a30"/><rect x="16" y="24" width="8" height="9" fill="#f5cdb1"/><ellipse cx="20" cy="16" rx="8.5" ry="10.5" fill="#f5cdb1"/><path d="M11 15 Q10 3 20 3 Q30 3 29 15 Q28 9 24 8 Q18 10 13 9 Q12 11 11 15 Z" fill="#4a2e1a"/></svg>
<div style="position:absolute;left:-125.6px;width:1200px;text-align:center;top:886.2px;font-size:24px;line-height:24px;color:#3f3f3f;font-weight:normal;letter-spacing:1.9px;white-space:pre;-webkit-text-stroke:0.35px #3f3f3f;">Team Leader</div>
<div style="position:absolute;left:-120.2px;width:1200px;text-align:center;top:917.0px;font-size:24px;line-height:24px;color:#3f3f3f;font-weight:normal;letter-spacing:1.9px;white-space:pre;-webkit-text-stroke:0.35px #3f3f3f;">Severes</div>
<div style="position:absolute;left:623px;top:876px;width:152px;height:73.5px;background:#fff;border:2.5px solid #dcdcdc;box-sizing:border-box;border-radius:1px;"></div>
<svg style="position:absolute;left:634px;top:886px;overflow:visible;" width="44" height="51" viewBox="0 0 40 48" fill="none"><path d="M0 48 Q0 36 9 33 L15 31 L25 31 L31 33 Q40 36 40 48 Z" fill="#f1efa6"/><path d="M15 31 L20 42 L25 31 Z" fill="#222"/><rect x="16" y="24" width="8" height="9" fill="#f5cdb1"/><ellipse cx="20" cy="16" rx="8.5" ry="10.5" fill="#f5cdb1"/><path d="M11 15 Q10 3 20 3 Q30 3 29 15 Q28 9 24 8 Q18 10 13 9 Q12 11 11 15 Z" fill="#a0562c"/></svg>
<div style="position:absolute;left:117.0px;width:1200px;text-align:center;top:886.2px;font-size:24px;line-height:24px;color:#3f3f3f;font-weight:normal;letter-spacing:1.9px;white-space:pre;-webkit-text-stroke:0.35px #3f3f3f;">Sales</div>
<div style="position:absolute;left:121.6px;width:1200px;text-align:center;top:917.0px;font-size:24px;line-height:24px;color:#3f3f3f;font-weight:normal;letter-spacing:1.9px;white-space:pre;-webkit-text-stroke:0.35px #3f3f3f;">Harry</div>
<div style="position:absolute;left:839px;top:876px;width:145px;height:73.5px;background:#fff;border:2.5px solid #dcdcdc;box-sizing:border-box;border-radius:1px;"></div>
<svg style="position:absolute;left:852px;top:886px;overflow:visible;" width="43" height="51" viewBox="0 0 40 48" fill="none"><path d="M0 48 Q0 36 9 33 L15 31 L25 31 L31 33 Q40 36 40 48 Z" fill="#f8f1e8"/><path d="M10 48 V35 H14 V40 H26 V35 H30 V48 Z" fill="#7aa3d6"/><path d="M8 16 Q8 2 20 2 Q32 2 32 16 L33 34 Q27 36 20 33 Q13 36 7 34 Z" fill="#a34a2c"/><rect x="16" y="24" width="8" height="9" fill="#f5cdb1"/><ellipse cx="20" cy="16" rx="8.5" ry="10.5" fill="#f5cdb1"/><path d="M11 14 Q12 5 20 5 Q28 5 29 14 Q25 9 18 8 Q14 10 11 14 Z" fill="#a34a2c"/></svg>
<div style="position:absolute;left:335.0px;width:1200px;text-align:center;top:886.2px;font-size:24px;line-height:24px;color:#3f3f3f;font-weight:normal;letter-spacing:1.9px;white-space:pre;-webkit-text-stroke:0.35px #3f3f3f;">Sales</div>
<div style="position:absolute;left:333.8px;width:1200px;text-align:center;top:917.0px;font-size:24px;line-height:24px;color:#3f3f3f;font-weight:normal;letter-spacing:1.9px;white-space:pre;-webkit-text-stroke:0.35px #3f3f3f;">Joey</div>
<div style="position:absolute;left:1033px;top:876px;width:306px;height:73.5px;background:#fff;border:2.5px solid #dcdcdc;box-sizing:border-box;border-radius:1px;"></div>
<svg style="position:absolute;left:1046px;top:886px;overflow:visible;" width="43" height="51" viewBox="0 0 40 48" fill="none"><path d="M0 48 Q0 36 9 33 L15 31 L25 31 L31 33 Q40 36 40 48 Z" fill="#f8f1e8"/><path d="M10 48 V35 H14 V40 H26 V35 H30 V48 Z" fill="#f2c03e"/><rect x="16" y="24" width="8" height="9" fill="#f5cdb1"/><ellipse cx="20" cy="16" rx="8.5" ry="10.5" fill="#f5cdb1"/><path d="M2 16 Q4 6 12 5 Q20 0 28 5 Q36 6 38 16 Q33 12 30 12 Q20 8 10 12 Q7 12 2 16 Z" fill="#f3a41f"/><rect x="12" y="15" width="6" height="4" rx="1" stroke="#555" stroke-width="1" fill="none"/><rect x="22" y="15" width="6" height="4" rx="1" stroke="#555" stroke-width="1" fill="none"/></svg>
<div style="position:absolute;left:608.5px;width:1200px;text-align:center;top:886.2px;font-size:24px;line-height:24px;color:#3f3f3f;font-weight:normal;letter-spacing:1.9px;white-space:pre;-webkit-text-stroke:0.35px #3f3f3f;">Customer Service</div>
<div style="position:absolute;left:609.5px;width:1200px;text-align:center;top:917.0px;font-size:24px;line-height:24px;color:#3f3f3f;font-weight:normal;letter-spacing:1.9px;white-space:pre;-webkit-text-stroke:0.35px #3f3f3f;">Caesar</div>
<div style="position:absolute;left:1379px;top:876px;width:180px;height:73.5px;background:#fff;border:2.5px solid #dcdcdc;box-sizing:border-box;border-radius:1px;"></div>
<svg style="position:absolute;left:1391px;top:886px;overflow:visible;" width="43" height="51" viewBox="0 0 40 48" fill="none"><path d="M0 48 Q0 36 9 33 L15 31 L25 31 L31 33 Q40 36 40 48 Z" fill="#efe8dc"/><path d="M2 48 V39 Q3 33 10 32 L15.5 31 L20 46 V48 Z" fill="#111111"/><path d="M38 48 V39 Q37 33 30 32 L24.5 31 L20 46 V48 Z" fill="#111111"/><rect x="16" y="24" width="8" height="9" fill="#f5cdb1"/><ellipse cx="20" cy="16" rx="8.5" ry="10.5" fill="#f5cdb1"/><path d="M11 15 Q10 3 20 3 Q30 3 29 15 Q28 9 24 8 Q18 10 13 9 Q12 11 11 15 Z" fill="#a0603a"/><rect x="12" y="15" width="6" height="4" rx="1" stroke="#555" stroke-width="1" fill="none"/><rect x="22" y="15" width="6" height="4" rx="1" stroke="#555" stroke-width="1" fill="none"/></svg>
<div style="position:absolute;left:891.0px;width:1200px;text-align:center;top:886.2px;font-size:24px;line-height:24px;color:#3f3f3f;font-weight:normal;letter-spacing:1.9px;white-space:pre;-webkit-text-stroke:0.35px #3f3f3f;">Group 1</div>
<div style="position:absolute;left:887.0px;width:1200px;text-align:center;top:917.0px;font-size:24px;line-height:24px;color:#3f3f3f;font-weight:normal;letter-spacing:1.9px;white-space:pre;-webkit-text-stroke:0.35px #3f3f3f;">Pratik</div>
<div style="position:absolute;left:1611px;top:876px;width:180px;height:73.5px;background:#fff;border:2.5px solid #dcdcdc;box-sizing:border-box;border-radius:1px;"></div>
<svg style="position:absolute;left:1623px;top:886px;overflow:visible;" width="43" height="51" viewBox="0 0 40 48" fill="none"><path d="M0 48 Q0 36 9 33 L15 31 L25 31 L31 33 Q40 36 40 48 Z" fill="#f59a62"/><rect x="16" y="24" width="8" height="9" fill="#f5cdb1"/><ellipse cx="20" cy="16" rx="8.5" ry="10.5" fill="#f5cdb1"/><path d="M11 16 Q9 3 20 3 Q31 3 30 14 L30 28 Q27 20 27 12 Q20 9 13 11 Z" fill="#1f4a68"/></svg>
<div style="position:absolute;left:1123.4px;width:1200px;text-align:center;top:886.2px;font-size:24px;line-height:24px;color:#3f3f3f;font-weight:normal;letter-spacing:1.9px;white-space:pre;-webkit-text-stroke:0.35px #3f3f3f;">Group 2</div>
<div style="position:absolute;left:1123.5px;width:1200px;text-align:center;top:917.0px;font-size:24px;line-height:24px;color:#3f3f3f;font-weight:normal;letter-spacing:1.9px;white-space:pre;-webkit-text-stroke:0.35px #3f3f3f;">Litisha</div>
<div style="position:absolute;left:1808px;top:876px;width:180px;height:73.5px;background:#fff;border:2.5px solid #dcdcdc;box-sizing:border-box;border-radius:1px;"></div>
<svg style="position:absolute;left:1821px;top:886px;overflow:visible;" width="44" height="51" viewBox="0 0 40 48" fill="none"><path d="M0 48 Q0 36 9 33 L15 31 L25 31 L31 33 Q40 36 40 48 Z" fill="#f1ece4"/><path d="M15 31 L20 42 L25 31 Z" fill="#f08ab0"/><path d="M8 16 Q8 2 20 2 Q32 2 32 16 L33 34 Q27 36 20 33 Q13 36 7 34 Z" fill="#f3a035"/><rect x="16" y="24" width="8" height="9" fill="#f5cdb1"/><ellipse cx="20" cy="16" rx="8.5" ry="10.5" fill="#f5cdb1"/><path d="M11 14 Q12 5 20 5 Q28 5 29 14 Q25 9 18 8 Q14 10 11 14 Z" fill="#f3a035"/><rect x="12" y="15" width="6" height="4" rx="1" stroke="#555" stroke-width="1" fill="none"/><rect x="22" y="15" width="6" height="4" rx="1" stroke="#555" stroke-width="1" fill="none"/></svg>
<div style="position:absolute;left:1321.0px;width:1200px;text-align:center;top:886.2px;font-size:24px;line-height:24px;color:#3f3f3f;font-weight:normal;letter-spacing:1.9px;white-space:pre;-webkit-text-stroke:0.35px #3f3f3f;">Group 3</div>
<div style="position:absolute;left:1320.7px;width:1200px;text-align:center;top:917.0px;font-size:24px;line-height:24px;color:#3f3f3f;font-weight:normal;letter-spacing:1.9px;white-space:pre;-webkit-text-stroke:0.35px #3f3f3f;">Dhara</div>
<div style="position:absolute;left:112px;top:949px;width:2px;height:143px;background:#d2d2d2;border-radius:0px;"></div>
<div style="position:absolute;left:112px;top:982px;width:26px;height:2px;background:#d2d2d2;border-radius:0px;"></div>
<div style="position:absolute;left:138px;top:962px;width:74px;height:41px;background:#fff;border:2.5px solid #dcdcdc;box-sizing:border-box;border-radius:1px;"></div>
<div style="position:absolute;left:152.6px;top:971.2px;font-size:24px;line-height:24px;color:#3f3f3f;font-weight:normal;letter-spacing:1.9px;white-space:pre;-webkit-text-stroke:0.35px #3f3f3f;">Iris</div>
<div style="position:absolute;left:112px;top:1036px;width:26px;height:2px;background:#d2d2d2;border-radius:0px;"></div>
<div style="position:absolute;left:138px;top:1016px;width:96px;height:41px;background:#fff;border:2.5px solid #dcdcdc;box-sizing:border-box;border-radius:1px;"></div>
<div style="position:absolute;left:152.6px;top:1025.2px;font-size:24px;line-height:24px;color:#3f3f3f;font-weight:normal;letter-spacing:1.9px;white-space:pre;-webkit-text-stroke:0.35px #3f3f3f;">Abby</div>
<div style="position:absolute;left:112px;top:1090px;width:26px;height:2px;background:#d2d2d2;border-radius:0px;"></div>
<div style="position:absolute;left:138px;top:1070px;width:87px;height:41px;background:#fff;border:2.5px solid #dcdcdc;box-sizing:border-box;border-radius:1px;"></div>
<div style="position:absolute;left:152.6px;top:1079.2px;font-size:24px;line-height:24px;color:#3f3f3f;font-weight:normal;letter-spacing:1.9px;white-space:pre;-webkit-text-stroke:0.35px #3f3f3f;">Dick</div>
<div style="position:absolute;left:380px;top:949px;width:2px;height:89px;background:#d2d2d2;border-radius:0px;"></div>
<div style="position:absolute;left:380px;top:982px;width:26px;height:2px;background:#d2d2d2;border-radius:0px;"></div>
<div style="position:absolute;left:406px;top:962px;width:119px;height:41px;background:#fff;border:2.5px solid #dcdcdc;box-sizing:border-box;border-radius:1px;"></div>
<div style="position:absolute;left:422.3px;top:971.2px;font-size:24px;line-height:24px;color:#3f3f3f;font-weight:normal;letter-spacing:1.9px;white-space:pre;-webkit-text-stroke:0.35px #3f3f3f;">Green</div>
<div style="position:absolute;left:380px;top:1036px;width:26px;height:2px;background:#d2d2d2;border-radius:0px;"></div>
<div style="position:absolute;left:406px;top:1016px;width:84px;height:41px;background:#fff;border:2.5px solid #dcdcdc;box-sizing:border-box;border-radius:1px;"></div>
<div style="position:absolute;left:422.3px;top:1025.2px;font-size:24px;line-height:24px;color:#3f3f3f;font-weight:normal;letter-spacing:1.9px;white-space:pre;-webkit-text-stroke:0.35px #3f3f3f;">Max</div>
<div style="position:absolute;left:670px;top:949px;width:2px;height:143px;background:#d2d2d2;border-radius:0px;"></div>
<div style="position:absolute;left:670px;top:982px;width:27px;height:2px;background:#d2d2d2;border-radius:0px;"></div>
<div style="position:absolute;left:697px;top:962px;width:124px;height:41px;background:#fff;border:2.5px solid #dcdcdc;box-sizing:border-box;border-radius:1px;"></div>
<div style="position:absolute;left:712.7px;top:971.2px;font-size:24px;line-height:24px;color:#3f3f3f;font-weight:normal;letter-spacing:1.9px;white-space:pre;-webkit-text-stroke:0.35px #3f3f3f;">Tommy</div>
<div style="position:absolute;left:670px;top:1036px;width:27px;height:2px;background:#d2d2d2;border-radius:0px;"></div>
<div style="position:absolute;left:697px;top:1016px;width:104px;height:41px;background:#fff;border:2.5px solid #dcdcdc;box-sizing:border-box;border-radius:1px;"></div>
<div style="position:absolute;left:712.7px;top:1025.2px;font-size:24px;line-height:24px;color:#3f3f3f;font-weight:normal;letter-spacing:1.9px;white-space:pre;-webkit-text-stroke:0.35px #3f3f3f;">Leslie</div>
<div style="position:absolute;left:670px;top:1090px;width:27px;height:2px;background:#d2d2d2;border-radius:0px;"></div>
<div style="position:absolute;left:697px;top:1070px;width:103px;height:41px;background:#fff;border:2.5px solid #dcdcdc;box-sizing:border-box;border-radius:1px;"></div>
<div style="position:absolute;left:712.7px;top:1079.2px;font-size:24px;line-height:24px;color:#3f3f3f;font-weight:normal;letter-spacing:1.9px;white-space:pre;-webkit-text-stroke:0.35px #3f3f3f;">Jacob</div>
<div style="position:absolute;left:888px;top:949px;width:2px;height:143px;background:#d2d2d2;border-radius:0px;"></div>
<div style="position:absolute;left:888px;top:982px;width:27px;height:2px;background:#d2d2d2;border-radius:0px;"></div>
<div style="position:absolute;left:915px;top:962px;width:88px;height:41px;background:#fff;border:2.5px solid #dcdcdc;box-sizing:border-box;border-radius:1px;"></div>
<div style="position:absolute;left:930.0px;top:971.2px;font-size:24px;line-height:24px;color:#3f3f3f;font-weight:normal;letter-spacing:1.9px;white-space:pre;-webkit-text-stroke:0.35px #3f3f3f;">Josh</div>
<div style="position:absolute;left:888px;top:1036px;width:27px;height:2px;background:#d2d2d2;border-radius:0px;"></div>
<div style="position:absolute;left:915px;top:1016px;width:98px;height:41px;background:#fff;border:2.5px solid #dcdcdc;box-sizing:border-box;border-radius:1px;"></div>
<div style="position:absolute;left:930.0px;top:1025.2px;font-size:24px;line-height:24px;color:#3f3f3f;font-weight:normal;letter-spacing:1.9px;white-space:pre;-webkit-text-stroke:0.35px #3f3f3f;">Larry</div>
<div style="position:absolute;left:888px;top:1090px;width:27px;height:2px;background:#d2d2d2;border-radius:0px;"></div>
<div style="position:absolute;left:915px;top:1070px;width:101px;height:41px;background:#fff;border:2.5px solid #dcdcdc;box-sizing:border-box;border-radius:1px;"></div>
<div style="position:absolute;left:930.0px;top:1079.2px;font-size:24px;line-height:24px;color:#3f3f3f;font-weight:normal;letter-spacing:1.9px;white-space:pre;-webkit-text-stroke:0.35px #3f3f3f;">Susie</div>
<div style="position:absolute;left:1081px;top:949px;width:2px;height:143px;background:#d2d2d2;border-radius:0px;"></div>
<div style="position:absolute;left:1081px;top:982px;width:27px;height:2px;background:#d2d2d2;border-radius:0px;"></div>
<div style="position:absolute;left:1108px;top:962px;width:93px;height:41px;background:#fff;border:2.5px solid #dcdcdc;box-sizing:border-box;border-radius:1px;"></div>
<div style="position:absolute;left:1123.0px;top:971.2px;font-size:24px;line-height:24px;color:#3f3f3f;font-weight:normal;letter-spacing:1.9px;white-space:pre;-webkit-text-stroke:0.35px #3f3f3f;">Tony</div>
<div style="position:absolute;left:1081px;top:1036px;width:27px;height:2px;background:#d2d2d2;border-radius:0px;"></div>
<div style="position:absolute;left:1108px;top:1016px;width:120px;height:41px;background:#fff;border:2.5px solid #dcdcdc;box-sizing:border-box;border-radius:1px;"></div>
<div style="position:absolute;left:1123.0px;top:1025.2px;font-size:24px;line-height:24px;color:#3f3f3f;font-weight:normal;letter-spacing:1.9px;white-space:pre;-webkit-text-stroke:0.35px #3f3f3f;">Dennis</div>
<div style="position:absolute;left:1081px;top:1090px;width:27px;height:2px;background:#d2d2d2;border-radius:0px;"></div>
<div style="position:absolute;left:1108px;top:1070px;width:127px;height:41px;background:#fff;border:2.5px solid #dcdcdc;box-sizing:border-box;border-radius:1px;"></div>
<div style="position:absolute;left:1123.0px;top:1079.2px;font-size:24px;line-height:24px;color:#3f3f3f;font-weight:normal;letter-spacing:1.9px;white-space:pre;-webkit-text-stroke:0.35px #3f3f3f;">Edward</div>
<div style="position:absolute;left:1426px;top:949px;width:2px;height:89px;background:#d2d2d2;border-radius:0px;"></div>
<div style="position:absolute;left:1426px;top:982px;width:27px;height:2px;background:#d2d2d2;border-radius:0px;"></div>
<div style="position:absolute;left:1453px;top:962px;width:139px;height:41px;background:#fff;border:2.5px solid #dcdcdc;box-sizing:border-box;border-radius:1px;"></div>
<div style="position:absolute;left:1468.9px;top:971.2px;font-size:24px;line-height:24px;color:#3f3f3f;font-weight:normal;letter-spacing:1.9px;white-space:pre;-webkit-text-stroke:0.35px #3f3f3f;">Intern A</div>
<div style="position:absolute;left:1426px;top:1036px;width:27px;height:2px;background:#d2d2d2;border-radius:0px;"></div>
<div style="position:absolute;left:1453px;top:1016px;width:139px;height:41px;background:#fff;border:2.5px solid #dcdcdc;box-sizing:border-box;border-radius:1px;"></div>
<div style="position:absolute;left:1468.9px;top:1025.2px;font-size:24px;line-height:24px;color:#3f3f3f;font-weight:normal;letter-spacing:1.9px;white-space:pre;-webkit-text-stroke:0.35px #3f3f3f;">Intern B</div>
<div style="position:absolute;left:1898px;top:949px;width:2px;height:62px;background:#d2d2d2;border-radius:0px;"></div>
<div style="position:absolute;left:1846px;top:1010px;width:104px;height:60px;background:#fff;border:2.5px solid #dcdcdc;box-sizing:border-box;border-radius:1px;"></div>
<svg style="position:absolute;left:1859px;top:1015px;overflow:visible;" width="43" height="51" viewBox="0 0 40 48" fill="none"><path d="M0 48 Q0 36 9 33 L15 31 L25 31 L31 33 Q40 36 40 48 Z" fill="#151515"/><path d="M15 31 L20 42 L25 31 Z" fill="#f3f3f3"/><rect x="16" y="24" width="8" height="9" fill="#f5cdb1"/><ellipse cx="20" cy="16" rx="8.5" ry="10.5" fill="#f5cdb1"/><circle cx="20" cy="3.5" r="4" fill="#b0703c"/><path d="M11 14 Q11 5 20 5 Q29 5 29 14 Q25 9 20 9 Q15 9 11 14 Z" fill="#b0703c"/></svg>
<div style="position:absolute;left:1907.4px;top:1029.2px;font-size:24px;line-height:24px;color:#3f3f3f;font-weight:normal;letter-spacing:1.9px;white-space:pre;-webkit-text-stroke:0.35px #3f3f3f;">CJ</div>
<div style="position:absolute;left:528px;top:1290px;width:993px;height:15px;background:#cfcfcf;border-radius:7px;"></div>
<div style="position:absolute;left:2051px;top:632px;width:13px;height:568px;background:#cfcfd3;border-radius:6px;"></div>
<div style="position:absolute;left:72px;top:1164px;width:64px;height:64px;border-radius:50%;background:#d6f3e6;"></div>
<div style="position:absolute;left:80px;top:1172px;width:48px;height:48px;border-radius:50%;background:#1aaa72;"></div>
<svg style="position:absolute;left:91px;top:1183px;" width="26" height="26" viewBox="0 0 26 26" fill="none"><rect x="2" y="6" width="22" height="16" rx="8" fill="#fff"/><rect x="6" y="10" width="14" height="8" rx="4" fill="#222"/><circle cx="10" cy="14" r="1.5" fill="#9ef0c8"/><circle cx="16" cy="14" r="1.5" fill="#9ef0c8"/><path d="M7 6 L5 2 M19 6 L21 2" stroke="#222" stroke-width="1.5"/></svg>
<div style="position:absolute;left:2065px;top:280px;width:495px;height:1025px;background:#f8f8fb;border-radius:0px;"></div>
<div style="position:absolute;left:2065px;top:280px;width:1px;height:1025px;background:#e3e3ea;border-radius:0px;"></div>
<div style="position:absolute;left:2066px;top:280px;width:123px;height:68px;background:#d7eee6;border-radius:0px;"></div>
<div style="position:absolute;left:2066px;top:344px;width:123px;height:4px;background:#1aa377;border-radius:0px;"></div>
<div style="position:absolute;left:2066px;top:348px;width:494px;height:1px;background:#e6e6ec;border-radius:0px;"></div>
<svg style="position:absolute;left:2112px;top:296px;" width="34" height="34" viewBox="0 0 34 34" fill="none"><rect x="2" y="2" width="30" height="30" rx="7" stroke="#22a77b" stroke-width="3.2"/><rect x="10" y="12" width="14" height="10" rx="2" stroke="#22a77b" stroke-width="3.2"/></svg>
<svg style="position:absolute;left:2230px;top:295px;" width="41" height="40" viewBox="0 0 41 40" fill="none"><path d="M19 8 Q21 19 31 22 Q21 25 19 36 Q17 25 4 22 Q17 19 19 8 Z" stroke="#111" stroke-width="2.8" stroke-linejoin="round" fill="none"/><path d="M6 1 L7 5 L11 6 L7 7 L6 11 L5 7 L1 6 L5 5 Z" fill="#111"/><path d="M34 28 L35 32 L39 33 L35 34 L34 38 L33 34 L29 33 L33 32 Z" fill="#111"/></svg>
<svg style="position:absolute;left:2358px;top:298px;" width="31" height="35" viewBox="0 0 31 35" fill="none"><path d="M15.5 33 L7 23 A12.5 12.5 0 1 1 24 23 Z" stroke="#111" stroke-width="2.8" stroke-linejoin="round" fill="none"/><circle cx="11" cy="12" r="1.8" fill="#111"/><circle cx="20" cy="12" r="1.8" fill="#111"/><path d="M10 17 Q15.5 21 21 17" stroke="#111" stroke-width="2.5" fill="none" stroke-linecap="round"/></svg>
<svg style="position:absolute;left:2479px;top:298px;" width="34" height="34" viewBox="0 0 34 34" fill="none"><path d="M17 2 Q23 2 24 7 Q30 7 31 13 Q32 18 28 21 Q30 27 25 30 Q21 33 17 29 Q13 33 9 30 Q4 27 6 21 Q2 18 3 13 Q4 7 10 7 Q11 2 17 2 Z" stroke="#111" stroke-width="2.8" stroke-linejoin="round" fill="none"/><circle cx="17" cy="17" r="5" stroke="#111" stroke-width="2.8"/></svg>
<div style="position:absolute;left:2546px;top:350px;width:12px;height:710px;background:#cdcdd2;border-radius:6px;"></div>
<div style="position:absolute;left:2092.5px;top:376.0px;font-size:23px;line-height:23px;color:#2a2a2a;font-weight:bold;white-space:pre;">Layout</div>
<div style="position:absolute;left:2092.5px;top:454.1px;font-size:19.5px;line-height:19.5px;color:#444;font-weight:normal;white-space:pre;">Layout</div>
<div style="position:absolute;left:2347px;top:423px;width:146px;height:79px;background:#ffffff;border:1.5px solid #e6e6ea;box-sizing:border-box;border-radius:10px;"></div>
<svg style="position:absolute;left:2369px;top:449px;" width="37" height="29" viewBox="0 0 37 29" fill="none"><rect x="13" y="1" width="10" height="6" rx="1.5" fill="#333"/><path d="M18 7 V13 M4 19 V13 H32 V19 M18 13 V19" stroke="#333" stroke-width="1.8" fill="none"/><rect x="0" y="20" width="9" height="6" rx="1.5" fill="#333"/><rect x="13.5" y="20" width="9" height="6" rx="1.5" fill="#333"/><rect x="27" y="20" width="9" height="6" rx="1.5" fill="#333"/></svg>
<svg style="position:absolute;left:2463px;top:459.5px;" width="14" height="9" viewBox="0 0 14 9" fill="none"><path d="M2 2 L7 7 L12 2" stroke="#333" stroke-width="2.4" fill="none" stroke-linecap="round" stroke-linejoin="round"/></svg>
<div style="position:absolute;left:2092.5px;top:537.5px;font-size:19.5px;line-height:19.5px;color:#444;font-weight:normal;white-space:pre;">Topic Spacing</div>
<div style="position:absolute;left:2092.5px;top:600.5px;font-size:19.5px;line-height:19.5px;color:#444;font-weight:normal;white-space:pre;">Horizontal</div>
<div style="position:absolute;left:2195px;top:590px;width:93px;height:39px;background:#ffffff;border:1.5px solid #e3e3e8;box-sizing:border-box;border-radius:8px;"></div>
<div style="position:absolute;left:2208.0px;top:600.5px;font-size:19.5px;line-height:19.5px;color:#333;font-weight:normal;white-space:pre;">30</div>
<div style="position:absolute;left:2264px;top:597px;width:1px;height:25px;background:#e6e6ea;border-radius:0px;"></div>
<svg style="position:absolute;left:2270px;top:599px;" width="12" height="22" viewBox="0 0 12 22" fill="none"><path d="M1.5 7 L6 2 L10.5 7 Z M1.5 15 L6 20 L10.5 15 Z" fill="#333"/></svg>
<div style="position:absolute;left:2326.0px;top:600.5px;font-size:19.5px;line-height:19.5px;color:#444;font-weight:normal;white-space:pre;">Vertical</div>
<div style="position:absolute;left:2400px;top:590px;width:93px;height:39px;background:#ffffff;border:1.5px solid #e3e3e8;box-sizing:border-box;border-radius:8px;"></div>
<div style="position:absolute;left:2413.0px;top:600.5px;font-size:19.5px;line-height:19.5px;color:#333;font-weight:normal;white-space:pre;">30</div>
<div style="position:absolute;left:2469px;top:597px;width:1px;height:25px;background:#e6e6ea;border-radius:0px;"></div>
<svg style="position:absolute;left:2475px;top:599px;" width="12" height="22" viewBox="0 0 12 22" fill="none"><path d="M1.5 7 L6 2 L10.5 7 Z M1.5 15 L6 20 L10.5 15 Z" fill="#333"/></svg>
<div style="position:absolute;left:2093px;top:659px;width:24px;height:24px;background:#ececec;border:1.5px solid #dedede;box-sizing:border-box;border-radius:4px;"></div>
<div style="position:absolute;left:2128.8px;top:661.5px;font-size:19.5px;line-height:19.5px;color:#a9a9a9;font-weight:normal;white-space:pre;">Branch Free Positioning</div>
<div style="position:absolute;left:2092.5px;top:713px;width:24.0px;height:24px;background:#ffffff;border:1.5px solid #cfcfcf;box-sizing:border-box;border-radius:4px;"></div>
<div style="position:absolute;left:2127.7px;top:715.5px;font-size:19.5px;line-height:19.5px;color:#333;font-weight:normal;white-space:pre;">Alignment With Sibling Topic</div>
<div style="position:absolute;left:2092.5px;top:765px;width:24.0px;height:24px;background:#ffffff;border:1.5px solid #cfcfcf;box-sizing:border-box;border-radius:4px;"></div>
<div style="position:absolute;left:2127.7px;top:767.5px;font-size:19.5px;line-height:19.5px;color:#333;font-weight:normal;white-space:pre;">Flexible Floating Topic</div>
<div style="position:absolute;left:2092.5px;top:817px;width:24.0px;height:24px;background:#ffffff;border:1.5px solid #cfcfcf;box-sizing:border-box;border-radius:4px;"></div>
<div style="position:absolute;left:2127.7px;top:819.5px;font-size:19.5px;line-height:19.5px;color:#333;font-weight:normal;white-space:pre;">Topic Overlap</div>
<div style="position:absolute;left:2092.5px;top:1259px;width:24.0px;height:24px;background:#ffffff;border:1.5px solid #cfcfcf;box-sizing:border-box;border-radius:4px;"></div>
<div style="position:absolute;left:2127.7px;top:1261.5px;font-size:19.5px;line-height:19.5px;color:#333;font-weight:normal;white-space:pre;">Hand-Drawn Style</div>
<div style="position:absolute;left:2092px;top:868px;width:428px;height:1px;background:#e3e3e8;border-radius:0px;"></div>
<div style="position:absolute;left:2092.5px;top:896.5px;font-size:23px;line-height:23px;color:#2a2a2a;font-weight:bold;white-space:pre;">Theme</div>
<div style="position:absolute;left:2092.5px;top:974.5px;font-size:19.5px;line-height:19.5px;color:#444;font-weight:normal;white-space:pre;">Theme</div>
<div style="position:absolute;left:2347px;top:944px;width:146px;height:78px;background:#ffffff;border:1.5px solid #e6e6ea;box-sizing:border-box;border-radius:10px;"></div>
<svg style="position:absolute;left:2371px;top:963px;" width="68" height="38" viewBox="0 0 68 38" fill="none"><rect x="1" y="14" width="24" height="10" rx="1" fill="#2a4f8f"/><path d="M25 19 Q30 19 30 12 V6 Q30 4 33 4 M30 19 Q30 26 33 34" stroke="#d9d9d9" stroke-width="1" fill="none"/><rect x="33" y="2" width="18" height="7" rx="1" fill="#f0c66a"/><rect x="33" y="14" width="18" height="7" rx="1" fill="#f0c66a"/><rect x="33" y="29" width="18" height="8" rx="1" fill="#f0c66a"/><rect x="51" y="29" width="14" height="8" rx="1" stroke="#ddd" stroke-width="1" fill="none"/><rect x="55" y="10" width="12" height="6" rx="1" fill="#2a4f8f"/><path d="M51 5 Q54 5 54 13 M51 17 H55" stroke="#ccc" stroke-width="1"/></svg>
<svg style="position:absolute;left:2463px;top:979.5px;" width="14" height="9" viewBox="0 0 14 9" fill="none"><path d="M2 2 L7 7 L12 2" stroke="#333" stroke-width="2.4" fill="none" stroke-linecap="round" stroke-linejoin="round"/></svg>
<div style="position:absolute;left:2092.5px;top:1061.5px;font-size:19.5px;line-height:19.5px;color:#444;font-weight:normal;white-space:pre;">Colored Branch</div>
<div style="position:absolute;left:2281px;top:1044px;width:49px;height:52px;background:#f0f0f3;border:2px solid #dcdce0;box-sizing:border-box;border-radius:8px;"></div>
<svg style="position:absolute;left:2290px;top:1054px;" width="33" height="33" viewBox="0 0 33 33" fill="none"><rect x="1.2" y="1.2" width="30.6" height="30.6" rx="3" fill="#333"/><rect x="3.0" y="3.0" width="13" height="8.5" fill="#1fbf8f"/><rect x="16.5" y="3.0" width="13" height="8.5" fill="#1fbf8f"/><rect x="3.0" y="12.0" width="13" height="8.5" fill="#1fbf8f"/><rect x="16.5" y="12.0" width="13" height="8.5" fill="#1fbf8f"/><rect x="3.0" y="21.0" width="13" height="8.5" fill="#1fbf8f"/><rect x="16.5" y="21.0" width="13" height="8.5" fill="#1fbf8f"/></svg>
<svg style="position:absolute;left:2340.5px;top:1054px;" width="33" height="33" viewBox="0 0 33 33" fill="none"><rect x="1.2" y="1.2" width="30.6" height="30.6" rx="3" fill="#333"/><rect x="3.0" y="3.0" width="13" height="8.5" fill="#7ed3a8"/><rect x="16.5" y="3.0" width="13" height="8.5" fill="#9a6fd6"/><rect x="3.0" y="12.0" width="13" height="8.5" fill="#f3c34b"/><rect x="16.5" y="12.0" width="13" height="8.5" fill="#5aa0e8"/><rect x="3.0" y="21.0" width="13" height="8.5" fill="#f07a4a"/><rect x="16.5" y="21.0" width="13" height="8.5" fill="#d48ad8"/></svg>
<svg style="position:absolute;left:2391px;top:1054px;" width="33" height="33" viewBox="0 0 33 33" fill="none"><rect x="1.2" y="1.2" width="30.6" height="30.6" rx="3" fill="#333"/><rect x="3.0" y="3.0" width="13" height="8.5" fill="#1fbf8f"/><rect x="16.5" y="3.0" width="13" height="8.5" fill="#1fbf8f"/><rect x="3.0" y="12.0" width="13" height="8.5" fill="#f07a2a"/><rect x="16.5" y="12.0" width="13" height="8.5" fill="#f07a2a"/><rect x="3.0" y="21.0" width="13" height="8.5" fill="#4a90e2"/><rect x="16.5" y="21.0" width="13" height="8.5" fill="#4a90e2"/></svg>
<svg style="position:absolute;left:2442px;top:1054px;" width="33" height="33" viewBox="0 0 33 33" fill="none"><rect x="1.2" y="1.2" width="30.6" height="30.6" rx="3" fill="#333"/><rect x="3.0" y="3.0" width="13" height="8.5" fill="#1fbf8f"/><rect x="16.5" y="3.0" width="13" height="8.5" fill="#4a90e2"/><rect x="3.0" y="12.0" width="13" height="8.5" fill="#1fbf8f"/><rect x="16.5" y="12.0" width="13" height="8.5" fill="#4a90e2"/><rect x="3.0" y="21.0" width="13" height="8.5" fill="#1fbf8f"/><rect x="16.5" y="21.0" width="13" height="8.5" fill="#4a90e2"/></svg>
<div style="position:absolute;left:2092.5px;top:1131.5px;font-size:19.5px;line-height:19.5px;color:#444;font-weight:normal;white-space:pre;">Theme Color</div>
<div style="position:absolute;left:2281px;top:1117px;width:212px;height:45px;background:#ffffff;border:1.5px solid #e6e6ea;box-sizing:border-box;border-radius:8px;"></div>
<div style="position:absolute;left:2293px;top:1133px;width:15px;height:13px;background:#3a6fcc;border-radius:0px;"></div>
<div style="position:absolute;left:2308px;top:1133px;width:15px;height:13px;background:#f0736a;border-radius:0px;"></div>
<div style="position:absolute;left:2323px;top:1133px;width:15px;height:13px;background:#4b8fe6;border-radius:0px;"></div>
<div style="position:absolute;left:2338px;top:1133px;width:15px;height:13px;background:#5fd0c4;border-radius:0px;"></div>
<div style="position:absolute;left:2353px;top:1133px;width:15px;height:13px;background:#f6c24c;border-radius:0px;"></div>
<div style="position:absolute;left:2368px;top:1133px;width:15px;height:13px;background:#f0504f;border-radius:0px;"></div>
<div style="position:absolute;left:2383px;top:1133px;width:15px;height:13px;background:#8ec553;border-radius:0px;"></div>
<div style="position:absolute;left:2398px;top:1133px;width:15px;height:13px;background:#9360d6;border-radius:0px;"></div>
<div style="position:absolute;left:2413px;top:1133px;width:15px;height:13px;background:#58c9ea;border-radius:0px;"></div>
<div style="position:absolute;left:2428px;top:1133px;width:15px;height:13px;background:#f0609e;border-radius:0px;"></div>
<svg style="position:absolute;left:2463px;top:1135.5px;" width="14" height="9" viewBox="0 0 14 9" fill="none"><path d="M2 2 L7 7 L12 2" stroke="#333" stroke-width="2.4" fill="none" stroke-linecap="round" stroke-linejoin="round"/></svg>
<div style="position:absolute;left:2092.5px;top:1198.5px;font-size:19.5px;line-height:19.5px;color:#444;font-weight:normal;white-space:pre;">Theme Font</div>
<div style="position:absolute;left:2281px;top:1183px;width:212px;height:46px;background:#ffffff;border:1.5px solid #e6e6ea;box-sizing:border-box;border-radius:8px;"></div>
<div style="position:absolute;left:2289.7px;top:1200.8px;font-size:12px;line-height:12px;color:#333;font-weight:normal;white-space:pre;">Aa</div>
<div style="position:absolute;left:2314.0px;top:1198.1px;font-size:20px;line-height:20px;color:#333;font-weight:normal;white-space:pre;">Arial (Big)</div>
<svg style="position:absolute;left:2463px;top:1202.5px;" width="14" height="9" viewBox="0 0 14 9" fill="none"><path d="M2 2 L7 7 L12 2" stroke="#333" stroke-width="2.4" fill="none" stroke-linecap="round" stroke-linejoin="round"/></svg>
<svg style="position:absolute;left:25px;top:1323px;" width="31" height="19" viewBox="0 0 31 19" fill="none"><path d="M2 2 V17 M29 2 V17" stroke="#444" stroke-width="2"/><rect x="7" y="2" width="17" height="15" stroke="#444" stroke-width="2"/></svg>
<div style="position:absolute;left:77px;top:1313px;width:1px;height:37px;background:#d6d6de;border-radius:0px;"></div>
<div style="position:absolute;left:82px;top:1309px;width:138px;height:43px;background:#ededf4;border-radius:0px;"></div>
<div style="position:absolute;left:95.0px;top:1323.5px;font-size:19.5px;line-height:19.5px;color:#222;font-weight:normal;white-space:pre;">Page-1</div>
<svg style="position:absolute;left:229.0px;top:1329.0px;" width="10" height="6" viewBox="0 0 10 6" fill="none"><path d="M0 0 L10 0 L5.0 6 Z" fill="#666"/></svg>
<div style="position:absolute;left:254px;top:1313px;width:1px;height:37px;background:#d6d6de;border-radius:0px;"></div>
<svg style="position:absolute;left:287px;top:1322px;" width="23" height="23" viewBox="0 0 23 23" fill="none"><path d="M11.5 1 V22 M1 11.5 H22" stroke="#444" stroke-width="2"/></svg>
<div style="position:absolute;left:343px;top:1313px;width:1px;height:37px;background:#d6d6de;border-radius:0px;"></div>
<div style="position:absolute;left:378.5px;top:1323.5px;font-size:19.5px;line-height:19.5px;color:#1a9e6e;font-weight:bold;white-space:pre;">Page-1</div>
<div style="position:absolute;left:472px;top:1313px;width:1px;height:37px;background:#d6d6de;border-radius:0px;"></div>
<div style="position:absolute;left:1804.0px;top:1324.5px;font-size:19.5px;line-height:19.5px;color:#333;font-weight:normal;white-space:pre;">Count: 29</div>
<svg style="position:absolute;left:1894px;top:1322px;" width="20" height="19" viewBox="0 0 20 19" fill="none"><path d="M1 6 L5 1 H15 L19 6 L10 18 Z" fill="#f5b82e"/><path d="M1 6 H19 M6 6 L10 18 L14 6" stroke="#fde08a" stroke-width="1.2" fill="none"/></svg>
<svg style="position:absolute;left:1933px;top:1320px;" width="27" height="25" viewBox="0 0 27 25" fill="none"><path d="M2 4 L9 2 L17 5 L25 3 V21 L17 23 L9 20 L2 22 Z M9 2 V20 M17 5 V23" stroke="#444" stroke-width="2" fill="none" stroke-linejoin="round"/></svg>
<svg style="position:absolute;left:1980px;top:1320px;" width="26" height="25" viewBox="0 0 26 25" fill="none"><rect x="2" y="2" width="22" height="21" rx="2" stroke="#444" stroke-width="2"/><rect x="7" y="7" width="12" height="11" rx="1" stroke="#444" stroke-width="2"/></svg>
<svg style="position:absolute;left:2027px;top:1320px;" width="26" height="25" viewBox="0 0 26 25" fill="none"><rect x="2" y="2" width="22" height="21" rx="2" stroke="#444" stroke-width="2"/><path d="M6 10 V6 H10 M16 6 H20 V10 M20 15 V19 H16 M10 19 H6 V15" stroke="#444" stroke-width="2" fill="none"/></svg>
<div style="position:absolute;left:2073px;top:1332px;width:16px;height:2px;background:#555;border-radius:0px;"></div>
<div style="position:absolute;left:2097px;top:1331px;width:27px;height:3px;background:#222;border-radius:0px;"></div>
<div style="position:absolute;left:2144px;top:1332px;width:119px;height:1px;background:#cfcfd6;border-radius:0px;"></div>
<div style="position:absolute;left:2122px;top:1321px;width:17px;height:17px;border-radius:50%;border:3.5px solid #111;background:#fff;"></div>
<svg style="position:absolute;left:2273px;top:1324px;" width="17" height="17" viewBox="0 0 17 17" fill="none"><path d="M8.5 1 V16 M1 8.5 H16" stroke="#444" stroke-width="2"/></svg>
<div style="position:absolute;left:2311.0px;top:1324.5px;font-size:19.5px;line-height:19.5px;color:#333;font-weight:normal;white-space:pre;">83%</div>
<svg style="position:absolute;left:2360.5px;top:1330.5px;" width="9" height="5" viewBox="0 0 9 5" fill="none"><path d="M0 0 L9 0 L4.5 5 Z" fill="#777"/></svg>
<svg style="position:absolute;left:2451px;top:1319px;" width="27" height="27" viewBox="0 0 27 27" fill="none"><path d="M2 8 V2 H8 M19 2 H25 V8 M25 19 V25 H19 M8 25 H2 V19" stroke="#444" stroke-width="2.2" fill="none"/></svg>
<svg style="position:absolute;left:2508px;top:1319px;" width="27" height="27" viewBox="0 0 27 27" fill="none"><rect x="2" y="2" width="23" height="23" rx="2" stroke="#444" stroke-width="2.2"/><path d="M6 13.5 H21 M6 9 V18 M21 9 V18" stroke="#444" stroke-width="2" fill="none"/></svg>
<div style="position:absolute;left:1100px;top:-30px;width:370px;height:30px;box-shadow:0 2px 8px rgba(40,40,80,0.10);background:#e9e9f2;"></div>
<div style="position:absolute;left:1377px;top:212px;width:461px;height:191px;background:#fff;border-radius:12px;box-shadow:0 2px 10px rgba(0,0,0,0.10);"></div>
<div style="position:absolute;left:1382px;top:217px;width:453px;height:43px;background:#f2f2f4;border-radius:10px;"></div>
<svg style="position:absolute;left:1397px;top:229px;" width="22" height="19" viewBox="0 0 22 19" fill="none"><rect x="1" y="1" width="20" height="17" rx="1" stroke="#444" stroke-width="1.8"/><circle cx="6" cy="6" r="1.5" fill="#444"/><path d="M2 16 L8 10 L12 14 L15 11 L20 15" stroke="#444" stroke-width="1.8" fill="none"/></svg>
<div style="position:absolute;left:1429.7px;top:229.1px;font-size:19.5px;line-height:19.5px;color:#333;font-weight:normal;white-space:pre;">Picture</div>
<div style="position:absolute;left:590.0px;width:1200px;text-align:right;top:229.1px;font-size:19.5px;line-height:19.5px;color:#aaa;font-weight:normal;white-space:pre;">Ctrl+Shift+P</div>
<svg style="position:absolute;left:1397px;top:270px;" width="23" height="23" viewBox="0 0 23 23" fill="none"><path d="M4 20 V5 H8 L9 2 H13 L14 5 H18 V9" stroke="#555" stroke-width="1.8" fill="none"/><path d="M11 9 L7 15 H11 L9 21" stroke="#555" stroke-width="1.8" fill="none"/><text x="12" y="22" font-size="9" fill="#555" font-family="Liberation Sans">AI</text></svg>
<div style="position:absolute;left:1429.7px;top:272.0px;font-size:19.5px;line-height:19.5px;color:#333;font-weight:normal;white-space:pre;">AI-generated Images</div>
<div style="position:absolute;left:1636px;top:268px;width:47px;height:20px;border-radius:10px 10px 10px 3px;background:linear-gradient(90deg,#e33ed2,#f24a48);"></div>
<div style="position:absolute;left:1645.0px;top:271.3px;font-size:15px;line-height:15px;color:#fff;font-weight:bold;font-style:italic;white-space:pre;">Hot</div>
<div style="position:absolute;left:1377px;top:306px;width:461px;height:1px;background:#eeeeee;border-radius:0px;"></div>
<div style="position:absolute;left:1394px;top:319px;width:27px;height:27px;background:#07a384;border-radius:5px;"></div>
<svg style="position:absolute;left:1400px;top:324px;" width="16" height="18" viewBox="0 0 16 18" fill="none"><path d="M4 16 V2 H9 A4.5 4.5 0 0 1 9 11 H6" stroke="#fff" stroke-width="3" fill="none"/></svg>
<div style="position:absolute;left:1429.7px;top:323.0px;font-size:19.5px;line-height:19.5px;color:#333;font-weight:normal;white-space:pre;">Pexels HD Image Gallery</div>
<div style="position:absolute;left:1394px;top:361px;width:27px;height:27px;background:#f4e3e3;border-radius:5px;"></div>
<div style="position:absolute;left:1397px;top:364px;width:21px;height:21px;border-radius:50%;background:#f7b733;"></div>
<svg style="position:absolute;left:1397px;top:364px;" width="21" height="21" viewBox="0 0 21 21" fill="none"><circle cx="7" cy="9" r="1.5" fill="#7a3b10"/><circle cx="14" cy="9" r="1.5" fill="#7a3b10"/><path d="M7 14 Q10.5 17 14 14" stroke="#7a3b10" stroke-width="1.5" fill="none"/><circle cx="4" cy="14" r="2.5" fill="#f06a6a"/><circle cx="17" cy="14" r="2.5" fill="#f06a6a"/><path d="M1 3 L4 1 M18 2 L20 5" stroke="#e33" stroke-width="2"/></svg>
<div style="position:absolute;left:1429.7px;top:365.0px;font-size:19.5px;line-height:19.5px;color:#333;font-weight:normal;white-space:pre;">emoji clip art library</div>
<div style="position:absolute;left:1387.0px;top:415.5px;font-size:47.8px;line-height:47.8px;color:#ee0000;font-weight:bold;white-space:pre;">Select Picture to upload a file</div>
<div style="position:absolute;left:97px;top:31px;width:154px;height:78px;border:6px solid #ee0000;box-sizing:border-box;"></div>
<div style="position:absolute;left:1348px;top:77px;width:124px;height:147px;border:6px solid #ee0000;box-sizing:border-box;"></div>
<div style="position:absolute;left:29px;top:39px;width:62px;height:62px;border-radius:50%;background:#ee0000;"></div>
<div style="position:absolute;left:-540.0px;width:1200px;text-align:center;top:53.8px;font-size:38px;line-height:38px;color:#fff;font-weight:normal;white-space:pre;">1</div>
<div style="position:absolute;left:1270px;top:48px;width:62px;height:62px;border-radius:50%;background:#ee0000;"></div>
<div style="position:absolute;left:701.0px;width:1200px;text-align:center;top:62.8px;font-size:38px;line-height:38px;color:#fff;font-weight:normal;white-space:pre;">2</div>
</body></html>
